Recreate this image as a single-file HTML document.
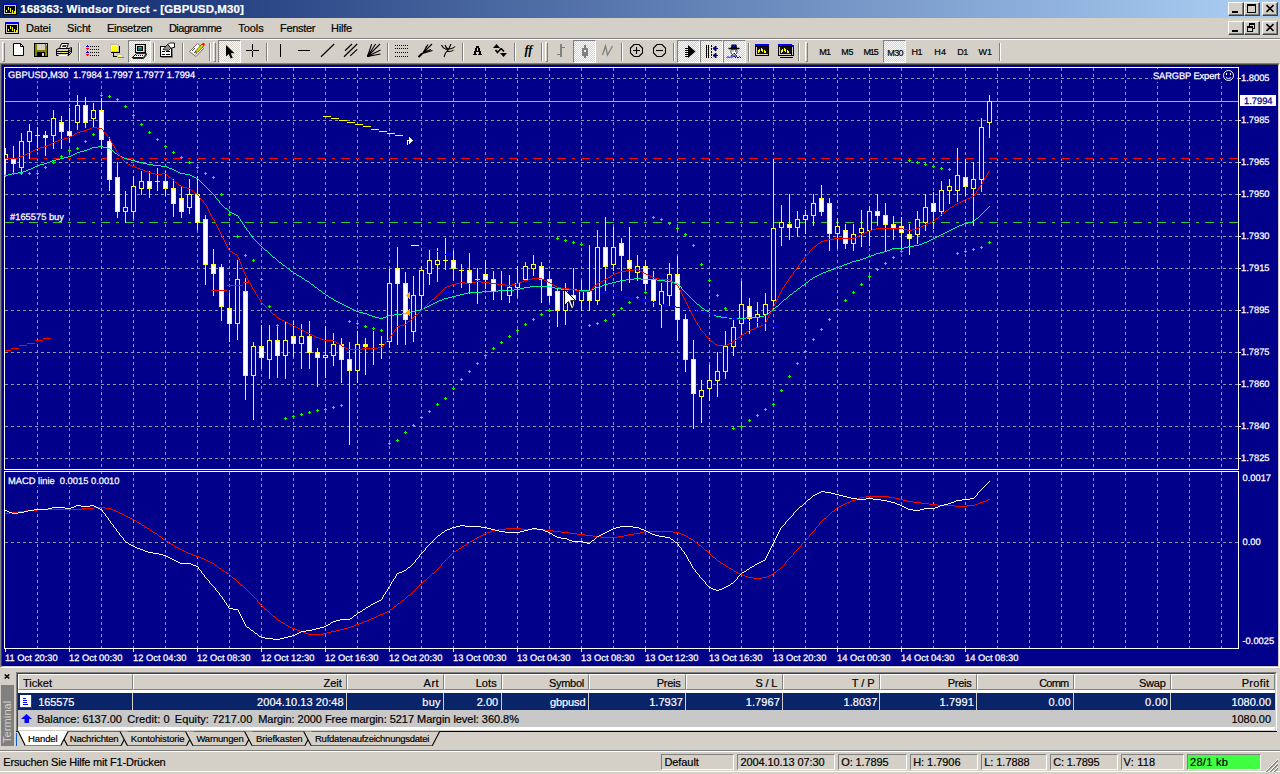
<!DOCTYPE html>
<html><head><meta charset="utf-8"><title>168363: Windsor Direct - [GBPUSD,M30]</title>
<style>

html,body{margin:0;padding:0}
body{width:1280px;height:774px;overflow:hidden;background:#d4d0c8;position:relative;font-family:"Liberation Sans",Arial,sans-serif;font-size:11px;color:#000}
.abs{position:absolute}
.tx{position:absolute;line-height:14px;white-space:pre;-webkit-text-stroke:0.2px currentColor}
#title{left:0;top:0;width:1280px;height:18px;background:linear-gradient(to right,#0a246a 0%,#a6caf0 96%,#a6caf0 100%)}
.wb{position:absolute;width:16px;height:14px;background:#d4d0c8;box-sizing:border-box;border:1px solid;border-color:#fff #404040 #404040 #fff;box-shadow:inset -1px -1px 0 #808080}
.wb svg{position:absolute;left:0;top:0}
.hl{position:absolute;height:1px;left:0;width:1280px}
.sep{position:absolute;top:43px;width:1px;height:18px;background:#808080;box-shadow:1px 0 0 #fff}
.grip{position:absolute;top:42px;width:3px;height:20px;box-sizing:border-box;border:1px solid;border-color:#fff #808080 #808080 #fff}
.btn{position:absolute;top:40px;width:23px;height:22px}
.btn.on{box-sizing:border-box;border:1px solid;border-color:#808080 #fff #fff #808080;background-color:#d4d0c8;background-image:linear-gradient(45deg,#fff 25%,transparent 25%,transparent 75%,#fff 75%),linear-gradient(45deg,#fff 25%,transparent 25%,transparent 75%,#fff 75%);background-size:2px 2px;background-position:0 0,1px 1px}
.btn svg{position:absolute;left:3px;top:2px}
.btn.on svg{left:3px;top:2px}
.hd{position:absolute;top:674px;height:16px;box-sizing:border-box;border:1px solid;border-color:#fff #808080 #808080 #fff;background:#d4d0c8}
.sp{position:absolute;top:754px;height:16px;box-sizing:border-box;border:1px solid;border-color:#808080 #fff #fff #808080}

</style></head><body>
<div id="title" class="abs"></div>
<svg class="abs" style="left:3px;top:3px" width="14" height="12" viewBox="0 0 14 12" shape-rendering="crispEdges"><rect x="0" y="0" width="14" height="12" fill="#000"/><rect x="0" y="0" width="14" height="2" fill="#0000ff"/><rect x="1" y="2" width="12" height="9" fill="#d4d0c8"/><rect x="2" y="3" width="10" height="7" fill="#000"/><path d="M3.500 7v2M5.500 4v3M7.500 5v4M9.500 7v3M11.500 8v2" stroke="#ffff00" stroke-width="1"/></svg>
<span id="t1" class="tx" style="left:20.30px;top:2.02px;font-size:11.5px;color:#fff;letter-spacing:0.107px;font-weight:bold;">168363: Windsor Direct - [GBPUSD,M30]</span>
<div class="wb" style="left:1228px;top:2px"><svg width="14" height="12" viewBox="0 0 14 12" shape-rendering="crispEdges"><rect x="3" y="8" width="6" height="2" fill="#000"/></svg></div><div class="wb" style="left:1244px;top:2px"><svg width="14" height="12" viewBox="0 0 14 12" shape-rendering="crispEdges"><path d="M2.500 1.500h8v8h-8z" fill="none" stroke="#000"/><rect x="2" y="1" width="9" height="2" fill="#000"/></svg></div><div class="wb" style="left:1262px;top:2px"><svg width="14" height="12" viewBox="0 0 14 12" shape-rendering="crispEdges"><path d="M3.500 2.200L10.500 8.800M10.500 2.200L3.500 8.800" stroke="#000" stroke-width="1.600" fill="none" shape-rendering="auto"/></svg></div>
<svg class="abs" style="left:5px;top:22px" width="14" height="12" viewBox="0 0 14 12" shape-rendering="crispEdges"><rect x="0" y="0" width="14" height="12" fill="#000"/><rect x="0" y="0" width="14" height="2" fill="#0000ff"/><rect x="1" y="2" width="12" height="9" fill="#d4d0c8"/><rect x="2" y="3" width="10" height="7" fill="#000"/><path d="M3.500 7v2M5.500 4v3M7.500 5v4M9.500 7v3M11.500 8v2" stroke="#ffff00" stroke-width="1"/></svg>
<span id="t2" class="tx" style="left:26.00px;top:21.19px;font-size:11px;color:#000;letter-spacing:-0.178px;">Datei</span>
<span id="t3" class="tx" style="left:67.00px;top:21.19px;font-size:11px;color:#000;letter-spacing:-0.134px;">Sicht</span>
<span id="t4" class="tx" style="left:107.00px;top:21.19px;font-size:11px;color:#000;letter-spacing:-0.324px;">Einsetzen</span>
<span id="t5" class="tx" style="left:168.90px;top:21.19px;font-size:11px;color:#000;letter-spacing:-0.473px;">Diagramme</span>
<span id="t6" class="tx" style="left:238.30px;top:21.19px;font-size:11px;color:#000;letter-spacing:-0.077px;">Tools</span>
<span id="t7" class="tx" style="left:280.10px;top:21.19px;font-size:11px;color:#000;letter-spacing:-0.314px;">Fenster</span>
<span id="t8" class="tx" style="left:331.10px;top:21.19px;font-size:11px;color:#000;letter-spacing:-0.263px;">Hilfe</span>
<div class="wb" style="left:1228px;top:21px"><svg width="14" height="12" viewBox="0 0 14 12" shape-rendering="crispEdges"><rect x="3" y="8" width="6" height="2" fill="#000"/></svg></div><div class="wb" style="left:1244px;top:21px"><svg width="14" height="12" viewBox="0 0 14 12" shape-rendering="crispEdges"><path d="M4.500 2.500h5v4h-5z" fill="none" stroke="#000"/><rect x="4" y="1" width="6" height="2" fill="#000"/><path d="M2.500 5.500h5v4h-5z" fill="#d4d0c8" stroke="#000"/><rect x="2" y="4" width="6" height="2" fill="#000"/></svg></div><div class="wb" style="left:1262px;top:21px"><svg width="14" height="12" viewBox="0 0 14 12" shape-rendering="crispEdges"><path d="M3.500 2.200L10.500 8.800M10.500 2.200L3.500 8.800" stroke="#000" stroke-width="1.600" fill="none" shape-rendering="auto"/></svg></div>
<div class="hl" style="top:38px;background:#808080"></div><div class="hl" style="top:39px;background:#fff"></div>
<div class="grip" style="left:2px"></div>
<svg class="abs" style="left:10px;top:42px" width="16" height="16" viewBox="0 0 16 16"><path d="M3.500 1.500H10.500L13.500 4.500V13.500H3.500Z" fill="#fff" stroke="#000"/><path d="M10.500 1.500V4.500H13.500" fill="none" stroke="#000"/></svg>
<svg class="abs" style="left:32px;top:42px" width="16" height="16" viewBox="0 0 16 16"><g shape-rendering="crispEdges"><rect x="2" y="1" width="14" height="14" fill="#000"/><rect x="3" y="2" width="12" height="12" fill="#808000"/><rect x="5" y="2" width="8" height="6" fill="#d4d0c8"/><rect x="5" y="10" width="8" height="4" fill="#000"/><rect x="10" y="11" width="2" height="3" fill="#d4d0c8"/><rect x="14" y="2" width="1" height="1" fill="#d4d0c8"/></g></svg>
<svg class="abs" style="left:56px;top:42px" width="16" height="16" viewBox="0 0 16 16"><path d="M3.500 6.500L5.500 1.500H12.500L10.500 6.500Z" fill="#fff" stroke="#000"/><path d="M6.500 3.500H10.500M6 4.500H10" stroke="#000" stroke-width=".8"/><path d="M0.500 7.500L3 6.500H13L15.500 5.500V10.500L12.500 13.500H0.500Z" fill="#d4d0c8" stroke="#000"/><path d="M0.500 9.500H12.500L15.500 7M0.500 11.500H12.500L15.500 8.500M12.500 7.500V13.500" stroke="#000" fill="none"/><rect x="6" y="10" width="4" height="1" fill="#ffff00"/><path d="M2.500 13.500H11.500" stroke="#fff"/></svg>
<div class="sep" style="left:78px"></div>
<svg class="abs" style="left:85px;top:42px" width="16" height="16" viewBox="0 0 16 16"><g shape-rendering="crispEdges"><path d="M5 4.500H14M5 7.500H14M5 10.500H14M5 13.500H14" stroke="#000" stroke-dasharray="1 1"/><path d="M2 3h1v1h1v1h-3v-1h1zM2 9h1v1h1v1h-3v-1h1z" fill="#0000ff"/><path d="M1 6h3v1h-1v1h-1v-1h-1zM1 12h3v1h-1v1h-1v-1h-1z" fill="#ff0000"/></g></svg>
<svg class="abs" style="left:108px;top:42px" width="16" height="16" viewBox="0 0 16 16"><g shape-rendering="crispEdges"><rect x="3" y="1" width="4" height="2" fill="#c0c0c0"/><rect x="2" y="2" width="9" height="8" fill="#c0c0c0"/><rect x="3" y="3" width="7" height="6" fill="#ffffa0"/><path d="M3 3.500H10M3 5.500H10M3 7.500H10" stroke="#ffff00" stroke-dasharray="1 1"/><path d="M4 4.500H10M4 6.500H10M4 8.500H10" stroke="#ffff00" stroke-dasharray="1 1"/><rect x="11" y="4" width="1" height="7" fill="#000"/><rect x="3" y="10" width="9" height="1" fill="#000"/><rect x="5" y="11" width="1" height="4" fill="#000"/><rect x="5" y="14" width="4" height="1" fill="#000"/><rect x="9" y="11" width="3" height="1" fill="#c0c0c0"/><rect x="9" y="12" width="6" height="3" fill="#c0c0c0"/><rect x="10" y="13" width="4" height="2" fill="#ffff60"/><rect x="10" y="15" width="6" height="1" fill="#808080"/></g></svg>
<div class="btn on" style="left:128px;width:23px;height:23px"></div>
<svg class="abs" style="left:131px;top:43px" width="16" height="16" viewBox="0 0 16 16"><g shape-rendering="crispEdges"><rect x="4" y="1" width="11" height="9" fill="#000"/><rect x="5" y="2" width="8" height="7" fill="#e8e6e0"/><rect x="13" y="2" width="1" height="7" fill="#808080"/><rect x="6" y="3" width="6" height="5" fill="#000"/><rect x="7" y="4" width="4" height="3" fill="#008080"/><rect x="8" y="4" width="2" height="1" fill="#00e0e0"/></g><path d="M5.500 10.700H15.300L12.300 14.600H1.300Z" fill="#fff" stroke="#000" stroke-width="1"/><path d="M4.500 12.600H12" stroke="#000" stroke-dasharray="1 1" shape-rendering="crispEdges"/><path d="M15.300 10.700V12L12.500 15.600H2" stroke="#000" fill="none" stroke-width=".9"/></svg>
<div class="sep" style="left:153px"></div>
<svg class="abs" style="left:159px;top:42px" width="16" height="16" viewBox="0 0 16 16"><g shape-rendering="crispEdges"><rect x="1" y="4" width="12" height="11" fill="#000"/><rect x="2" y="5" width="10" height="9" fill="#fff"/><rect x="13" y="5" width="1" height="11" fill="#808080"/><rect x="2" y="15" width="12" height="1" fill="#808080"/><path d="M3 9.500H6M3 12.500H6M7 9.500H11M7 12.500H11" stroke="#000"/></g><path d="M4 7.500L8.500 2.500L12 6L9.500 8.500Z" fill="#909090" stroke="#000" stroke-width=".8"/><path d="M9 2.500L10.500 1H15.500V5.500H13.500L12 6.500Z" fill="#fff" stroke="#000" stroke-width=".9"/></svg>
<div class="sep" style="left:182px"></div>
<svg class="abs" style="left:189px;top:42px" width="16" height="16" viewBox="0 0 16 16"><path d="M0.500 9.500L8.500 1.500L14.500 6.500L7 14.500Z" fill="#fff" stroke="#606060" stroke-width=".9"/><path d="M3 9L6 6M5 11L8 8M6.500 12.500L8 11" stroke="#404040" stroke-width="1"/><path d="M7 8.500L13 2L15 3.500L9 10L6.500 10.500Z" fill="#e0e000" stroke="#404000" stroke-width=".7"/><path d="M13.500 1.500L15.500 3" stroke="#ff0000" stroke-width="2"/></svg>
<div class="sep" style="left:209px"></div>
<div class="grip" style="left:213px"></div>
<div class="btn on" style="left:218px;width:23px;height:23px"></div>
<svg class="abs" style="left:221px;top:43px" width="16" height="16" viewBox="0 0 16 16"><path d="M5 2V13.500L7.700 11L9.700 15.500L11.700 14.700L9.700 10.300H13.500Z" fill="#000"/></svg>
<svg class="abs" style="left:244px;top:42px" width="16" height="16" viewBox="0 0 16 16"><path d="M8.500 2V15M2 8.500H15" stroke="#000" shape-rendering="crispEdges"/><rect x="8" y="8" width="1" height="1" fill="#d4d0c8" shape-rendering="crispEdges"/></svg>
<div class="sep" style="left:266px"></div>
<svg class="abs" style="left:272px;top:42px" width="16" height="16" viewBox="0 0 16 16"><path d="M8.500 2V15" stroke="#000" shape-rendering="crispEdges"/></svg>
<svg class="abs" style="left:296px;top:42px" width="16" height="16" viewBox="0 0 16 16"><path d="M2 8.500H14" stroke="#000" shape-rendering="crispEdges"/></svg>
<svg class="abs" style="left:320px;top:42px" width="16" height="16" viewBox="0 0 16 16"><path d="M1 14.800L14.200 2" stroke="#000" stroke-width="1.200"/></svg>
<svg class="abs" style="left:343px;top:42px" width="16" height="16" viewBox="0 0 16 16"><path d="M1 14.800L14.200 2M2 8.700L9 2M7.200 13.900L14.200 7.400" stroke="#000" stroke-width="1.200"/></svg>
<svg class="abs" style="left:366px;top:42px" width="16" height="16" viewBox="0 0 16 16"><path d="M1.500 14.500L5.700 2M1.500 14.500L9.600 2M1.500 14.500L14 2M1.500 14.500L14.500 8M1.500 14.500L14.500 12" stroke="#000" stroke-width="1.100"/><path d="M1 15V12.500L4 13.500L3.500 15Z" fill="#000"/></svg>
<div class="sep" style="left:387px"></div>
<svg class="abs" style="left:394px;top:42px" width="16" height="16" viewBox="0 0 16 16"><path d="M1 3.500H15M1 6.500H15M1 10.500H15M1 14.500H15" stroke="#000" stroke-dasharray="1 1" shape-rendering="crispEdges"/></svg>
<svg class="abs" style="left:418px;top:42px" width="16" height="16" viewBox="0 0 16 16"><path d="M1 14.800L14 2M4.500 11.500L10 2.500M4.500 11.500L14.500 8.500M6 10L8.500 4M6 10L13 7.500" stroke="#000" stroke-width="1.100" fill="none"/><path d="M0.500 15L4 11.500" stroke="#000" stroke-width="1.800"/></svg>
<svg class="abs" style="left:440px;top:42px" width="16" height="16" viewBox="0 0 16 16"><path d="M4 15L5.500 11L8.500 7.500L11 2M8.500 7.500C10.500 6.500 13 7 15 4.500M8.500 7.500C6.500 7.500 3 6.500 1.500 3M6.500 9.500C9 9.500 12 10 13.500 8M5 3C5.500 5 7 6.500 8.500 7.500" stroke="#000" stroke-width="1.100" fill="none"/></svg>
<div class="sep" style="left:462px"></div>
<svg class="abs" style="left:469px;top:42px" width="16" height="16" viewBox="0 0 16 16"><g shape-rendering="crispEdges" fill="#000"><rect x="7" y="4" width="3" height="2"/><rect x="6" y="6" width="2" height="3"/><rect x="9" y="6" width="2" height="3"/><rect x="6" y="9" width="5" height="1"/><rect x="5" y="9" width="2" height="3"/><rect x="10" y="9" width="2" height="3"/><rect x="4" y="12" width="4" height="1"/><rect x="9" y="12" width="4" height="1"/></g></svg>
<svg class="abs" style="left:492px;top:42px" width="16" height="16" viewBox="0 0 16 16"><path d="M1 6L4.500 2L8 6Z M8 11L11.500 15L15 11Z" fill="#000"/><path d="M3.500 8L5.500 10.500L9 6.500M9 6.500L12 9.500" stroke="#000" stroke-width="1.700" fill="none"/></svg>
<div class="sep" style="left:514px"></div>
<svg class="abs" style="left:520px;top:42px" width="16" height="16" viewBox="0 0 16 16"><text x="8.500" y="12" font-family="Liberation Serif,serif" font-style="italic" font-weight="bold" font-size="12.500" text-anchor="middle" fill="#000">ff</text></svg>
<div class="sep" style="left:541px"></div>
<div class="grip" style="left:545px"></div>
<svg class="abs" style="left:553px;top:42px" width="16" height="16" viewBox="0 0 16 16"><g shape-rendering="crispEdges" fill="#808080"><rect x="7" y="2" width="2" height="13"/><rect x="4" y="12" width="4" height="1"/><rect x="8" y="5" width="4" height="1"/></g></svg>
<div class="btn on" style="left:573px;width:23px;height:23px"></div>
<svg class="abs" style="left:577px;top:43px" width="16" height="16" viewBox="0 0 16 16"><g shape-rendering="crispEdges" fill="#808080"><rect x="7" y="2" width="2" height="13"/><rect x="5" y="5" width="6" height="8"/><rect x="7" y="7" width="2" height="2" fill="#eeece8"/></g></svg>
<svg class="abs" style="left:600px;top:42px" width="16" height="16" viewBox="0 0 16 16"><path d="M2.500 13L5.500 4L7.500 13L12.500 4" stroke="#808080" stroke-width="1.300" fill="none"/></svg>
<div class="sep" style="left:621px"></div>
<svg class="abs" style="left:628px;top:42px" width="16" height="16" viewBox="0 0 16 16"><path d="M6 2.500H11L14.500 6V11L11 14.500H6L2.500 11V6Z" fill="none" stroke="#000" stroke-width="1.100"/><path d="M5 8.500H12M8.500 5V12" stroke="#000" stroke-width="1.100"/></svg>
<svg class="abs" style="left:651px;top:42px" width="16" height="16" viewBox="0 0 16 16"><path d="M6 2.500H11L14.500 6V11L11 14.500H6L2.500 11V6Z" fill="none" stroke="#000" stroke-width="1.100"/><path d="M5 8.500H12" stroke="#000" stroke-width="1.100"/></svg>
<div class="sep" style="left:673px"></div>
<div class="btn on" style="left:677px;width:23px;height:23px"></div>
<svg class="abs" style="left:680px;top:43px" width="16" height="16" viewBox="0 0 16 16"><path d="M5 5.500H9M5 7.500H9M5 9.500H9M5 11.500H9M5 13.500H9" stroke="#000" shape-rendering="crispEdges"/><path d="M8 2L15.500 8.500L8 15Z" fill="#000"/></svg>
<div class="btn on" style="left:700px;width:23px;height:23px"></div>
<svg class="abs" style="left:703px;top:43px" width="16" height="16" viewBox="0 0 16 16"><g shape-rendering="crispEdges"><path d="M3.500 2V15M5.500 2V15" stroke="#000"/><path d="M8.500 2V15" stroke="#000" stroke-dasharray="2 1"/></g><path d="M15 5.500H11M10 5.500L13 3V8ZM15 12.500H11M10 12.500L13 10V15Z" stroke="#000080" fill="#000080" stroke-width="1"/></svg>
<div class="btn on" style="left:723px;width:23px;height:23px"></div>
<svg class="abs" style="left:726px;top:43px" width="16" height="16" viewBox="0 0 16 16"><path d="M5 5L5.500 1.500H10.500L11 5Z" fill="#000"/><rect x="7" y="2" width="2" height="2" fill="#0000ff"/><path d="M2.500 5.500H13.500" stroke="#000" stroke-width="1.500"/><path d="M5 6.500V10L7 12H9L11 10V6.500Z" fill="#fff" stroke="#000" stroke-width=".7"/><path d="M6.500 8H7.500M9 8H10M7.500 10.500H9" stroke="#000" stroke-width=".9"/><path d="M9 7L11 10" stroke="#808080"/><path d="M0.500 15L2 13.500L3.500 15L5 13.500L6.500 15M9 15L10.500 13.500L12 15L13.500 13.500L15 15" stroke="#0000a0" fill="none" stroke-width="1"/><path d="M5 12.500L8 13.500L11 12.500" stroke="#0000a0" fill="none"/></svg>
<div class="sep" style="left:748px"></div>
<svg class="abs" style="left:754px;top:42px" width="16" height="16" viewBox="0 0 16 16"><g shape-rendering="crispEdges"><rect x="1" y="2" width="14" height="12" fill="#000"/><rect x="1" y="2" width="14" height="2" fill="#0000ff"/><rect x="2" y="5" width="12" height="8" fill="#d4d0c8"/><rect x="3" y="5" width="11" height="7" fill="#101010"/><path d="M4.500 8V11M5.500 7V10M7.500 6V9M8.500 7V10M10.500 8V11M11.500 9V11" stroke="#ffff00"/></g></svg>
<svg class="abs" style="left:778px;top:42px" width="16" height="16" viewBox="0 0 16 16"><g shape-rendering="crispEdges"><rect x="4" y="3" width="12" height="11" fill="#000"/><rect x="5" y="4" width="10" height="9" fill="#d4d0c8"/><rect x="12" y="3" width="4" height="2" fill="#0000ff"/><rect x="2" y="15" width="13" height="1" fill="#000"/><rect x="0" y="2" width="14" height="12" fill="#000"/><rect x="0" y="2" width="14" height="2" fill="#0000ff"/><rect x="1" y="5" width="12" height="8" fill="#d4d0c8"/><rect x="2" y="5" width="11" height="7" fill="#101010"/><path d="M3.500 8V11M4.500 7V10M6.500 6V9M7.500 7V10M9.500 8V11M10.500 9V11" stroke="#ffff00"/></g></svg>
<div class="sep" style="left:798px"></div>
<div class="grip" style="left:805px"></div>
<div class="btn on" style="left:883px;width:23px;height:23px"></div>
<span id="t9" class="tx" style="left:819.20px;top:44.88px;font-size:9px;color:#000;letter-spacing:-0.608px;">M1</span>
<span id="t10" class="tx" style="left:841.20px;top:44.88px;font-size:9px;color:#000;letter-spacing:-0.108px;">M5</span>
<span id="t11" class="tx" style="left:863.40px;top:44.88px;font-size:9px;color:#000;letter-spacing:-1.072px;">M15</span>
<span id="t12" class="tx" style="left:887.30px;top:45.88px;font-size:9px;color:#000;letter-spacing:-0.605px;">M30</span>
<span id="t13" class="tx" style="left:911.40px;top:44.88px;font-size:9px;color:#000;letter-spacing:-0.358px;">H1</span>
<span id="t14" class="tx" style="left:934.20px;top:44.88px;font-size:9px;color:#000;letter-spacing:0.192px;">H4</span>
<span id="t15" class="tx" style="left:957.20px;top:44.88px;font-size:9px;color:#000;letter-spacing:-0.358px;">D1</span>
<span id="t16" class="tx" style="left:978.50px;top:44.88px;font-size:9px;color:#000;letter-spacing:0.050px;">W1</span>
<div class="sep" style="left:999px"></div>
<div class="abs" style="left:0;top:63px;width:1280px;height:605px;box-sizing:border-box;border:1px solid;border-color:#808080 #fff #fff #808080"></div>
<div class="abs" style="left:1px;top:64px;width:1278px;height:603px;box-sizing:border-box;border:1px solid;border-color:#404040 #d4d0c8 #d4d0c8 #404040"></div>
<svg id="chart" width="1280" height="774" viewBox="0 0 1280 774" style="position:absolute;left:0;top:0" shape-rendering="crispEdges">
<rect x="2" y="65" width="1276" height="601" fill="#00008b"/>
<g fill="#fff">
<rect x="4" y="67" width="1235" height="1"/>
<rect x="4" y="67" width="1" height="582"/>
<rect x="1238" y="67" width="1" height="582"/>
<rect x="4" y="469" width="1235" height="1"/>
<rect x="4" y="471" width="1235" height="1"/>
<rect x="4" y="648" width="1235" height="1"/>
</g>
<rect x="4" y="470" width="1" height="1" fill="#00008b"/><rect x="1238" y="470" width="1" height="1" fill="#00008b"/>
<g stroke="#8e9ba7" stroke-width="1" stroke-dasharray="3 3" fill="none">
<path d="M37.5 68V469"/>
<path d="M37.5 472V648"/>
<path d="M69.5 68V469"/>
<path d="M69.5 472V648"/>
<path d="M101.5 68V469"/>
<path d="M101.5 472V648"/>
<path d="M133.5 68V469"/>
<path d="M133.5 472V648"/>
<path d="M165.5 68V469"/>
<path d="M165.5 472V648"/>
<path d="M197.5 68V469"/>
<path d="M197.5 472V648"/>
<path d="M229.5 68V469"/>
<path d="M229.5 472V648"/>
<path d="M261.5 68V469"/>
<path d="M261.5 472V648"/>
<path d="M293.5 68V469"/>
<path d="M293.5 472V648"/>
<path d="M325.5 68V469"/>
<path d="M325.5 472V648"/>
<path d="M357.5 68V469"/>
<path d="M357.5 472V648"/>
<path d="M389.5 68V469"/>
<path d="M389.5 472V648"/>
<path d="M421.5 68V469"/>
<path d="M421.5 472V648"/>
<path d="M453.5 68V469"/>
<path d="M453.5 472V648"/>
<path d="M485.5 68V469"/>
<path d="M485.5 472V648"/>
<path d="M517.5 68V469"/>
<path d="M517.5 472V648"/>
<path d="M549.5 68V469"/>
<path d="M549.5 472V648"/>
<path d="M581.5 68V469"/>
<path d="M581.5 472V648"/>
<path d="M613.5 68V469"/>
<path d="M613.5 472V648"/>
<path d="M645.5 68V469"/>
<path d="M645.5 472V648"/>
<path d="M677.5 68V469"/>
<path d="M677.5 472V648"/>
<path d="M709.5 68V469"/>
<path d="M709.5 472V648"/>
<path d="M741.5 68V469"/>
<path d="M741.5 472V648"/>
<path d="M773.5 68V469"/>
<path d="M773.5 472V648"/>
<path d="M805.5 68V469"/>
<path d="M805.5 472V648"/>
<path d="M837.5 68V469"/>
<path d="M837.5 472V648"/>
<path d="M869.5 68V469"/>
<path d="M869.5 472V648"/>
<path d="M901.5 68V469"/>
<path d="M901.5 472V648"/>
<path d="M933.5 68V469"/>
<path d="M933.5 472V648"/>
<path d="M965.5 68V469"/>
<path d="M965.5 472V648"/>
<path d="M997.5 68V469"/>
<path d="M997.5 472V648"/>
<path d="M1029.5 68V469"/>
<path d="M1029.5 472V648"/>
<path d="M1061.5 68V469"/>
<path d="M1061.5 472V648"/>
<path d="M1093.5 68V469"/>
<path d="M1093.5 472V648"/>
<path d="M1125.5 68V469"/>
<path d="M1125.5 472V648"/>
<path d="M1157.5 68V469"/>
<path d="M1157.5 472V648"/>
<path d="M1189.5 68V469"/>
<path d="M1189.5 472V648"/>
<path d="M1221.5 68V469"/>
<path d="M1221.5 472V648"/>
<path d="M5 78.5H1238"/>
<path d="M5 120.5H1238"/>
<path d="M5 162.5H1238"/>
<path d="M5 194.5H1238"/>
<path d="M5 236.5H1238"/>
<path d="M5 268.5H1238"/>
<path d="M5 310.5H1238"/>
<path d="M5 352.5H1238"/>
<path d="M5 384.5H1238"/>
<path d="M5 426.5H1238"/>
<path d="M5 458.5H1238"/>
<path d="M5 542.5H1238"/>
</g>
<rect x="5" y="101" width="1233" height="1" fill="#a8b0b8"/>
<g fill="#fff">
<rect x="1239" y="78" width="2" height="1"/>
<rect x="1239" y="120" width="2" height="1"/>
<rect x="1239" y="162" width="2" height="1"/>
<rect x="1239" y="194" width="2" height="1"/>
<rect x="1239" y="236" width="2" height="1"/>
<rect x="1239" y="268" width="2" height="1"/>
<rect x="1239" y="310" width="2" height="1"/>
<rect x="1239" y="352" width="2" height="1"/>
<rect x="1239" y="384" width="2" height="1"/>
<rect x="1239" y="426" width="2" height="1"/>
<rect x="1239" y="458" width="2" height="1"/>
<rect x="5" y="649" width="1" height="3"/>
<rect x="69" y="649" width="1" height="3"/>
<rect x="133" y="649" width="1" height="3"/>
<rect x="197" y="649" width="1" height="3"/>
<rect x="261" y="649" width="1" height="3"/>
<rect x="325" y="649" width="1" height="3"/>
<rect x="389" y="649" width="1" height="3"/>
<rect x="453" y="649" width="1" height="3"/>
<rect x="517" y="649" width="1" height="3"/>
<rect x="581" y="649" width="1" height="3"/>
<rect x="645" y="649" width="1" height="3"/>
<rect x="709" y="649" width="1" height="3"/>
<rect x="773" y="649" width="1" height="3"/>
<rect x="837" y="649" width="1" height="3"/>
<rect x="901" y="649" width="1" height="3"/>
<rect x="965" y="649" width="1" height="3"/>
</g>
<path d="M29 158.5H1238" stroke="#ff0000" stroke-width="1" stroke-dasharray="9 6 3 6" fill="none"/>
<path d="M5 222.5H1238" stroke="#32cd32" stroke-width="1" stroke-dasharray="9 6 3 6" fill="none"/>
<g fill="#ffff00">
<rect x="5" y="148" width="1" height="28"/>
<rect x="5" y="154" width="3" height="6"/>
<rect x="13" y="146" width="1" height="28"/>
<rect x="11" y="159" width="5" height="5"/>
<rect x="21" y="133" width="1" height="41"/>
<rect x="19" y="141" width="5" height="27"/>
<rect x="29" y="124" width="1" height="35"/>
<rect x="27" y="131" width="5" height="11"/>
<rect x="37" y="127" width="1" height="24"/>
<rect x="35" y="135" width="5" height="1"/>
<rect x="45" y="131" width="1" height="25"/>
<rect x="43" y="135" width="5" height="3"/>
<rect x="53" y="110" width="1" height="39"/>
<rect x="51" y="118" width="5" height="18"/>
<rect x="61" y="116" width="1" height="33"/>
<rect x="59" y="122" width="5" height="10"/>
<rect x="69" y="108" width="1" height="35"/>
<rect x="67" y="131" width="5" height="5"/>
<rect x="77" y="95" width="1" height="35"/>
<rect x="75" y="105" width="5" height="18"/>
<rect x="85" y="97" width="1" height="31"/>
<rect x="83" y="105" width="5" height="18"/>
<rect x="93" y="103" width="1" height="24"/>
<rect x="91" y="110" width="5" height="9"/>
<rect x="101" y="98" width="1" height="51"/>
<rect x="99" y="110" width="5" height="30"/>
<rect x="109" y="137" width="1" height="54"/>
<rect x="107" y="141" width="5" height="39"/>
<rect x="117" y="162" width="1" height="56"/>
<rect x="115" y="177" width="5" height="35"/>
<rect x="125" y="191" width="1" height="32"/>
<rect x="123" y="207" width="5" height="5"/>
<rect x="133" y="176" width="1" height="43"/>
<rect x="131" y="186" width="5" height="26"/>
<rect x="141" y="171" width="1" height="24"/>
<rect x="139" y="181" width="5" height="8"/>
<rect x="149" y="171" width="1" height="27"/>
<rect x="147" y="181" width="5" height="8"/>
<rect x="157" y="168" width="1" height="23"/>
<rect x="155" y="181" width="5" height="1"/>
<rect x="165" y="171" width="1" height="25"/>
<rect x="163" y="181" width="5" height="8"/>
<rect x="173" y="179" width="1" height="38"/>
<rect x="171" y="188" width="5" height="16"/>
<rect x="181" y="186" width="1" height="32"/>
<rect x="179" y="198" width="5" height="14"/>
<rect x="189" y="179" width="1" height="35"/>
<rect x="187" y="194" width="5" height="14"/>
<rect x="197" y="176" width="1" height="54"/>
<rect x="195" y="194" width="5" height="29"/>
<rect x="205" y="215" width="1" height="70"/>
<rect x="203" y="219" width="5" height="46"/>
<rect x="213" y="249" width="1" height="47"/>
<rect x="211" y="264" width="5" height="10"/>
<rect x="221" y="264" width="1" height="57"/>
<rect x="219" y="267" width="5" height="40"/>
<rect x="229" y="293" width="1" height="49"/>
<rect x="227" y="308" width="5" height="16"/>
<rect x="237" y="260" width="1" height="80"/>
<rect x="235" y="279" width="5" height="45"/>
<rect x="245" y="278" width="1" height="122"/>
<rect x="243" y="291" width="5" height="85"/>
<rect x="253" y="342" width="1" height="78"/>
<rect x="251" y="346" width="5" height="30"/>
<rect x="261" y="325" width="1" height="44"/>
<rect x="259" y="346" width="5" height="12"/>
<rect x="269" y="325" width="1" height="54"/>
<rect x="267" y="340" width="5" height="20"/>
<rect x="277" y="324" width="1" height="54"/>
<rect x="275" y="340" width="5" height="16"/>
<rect x="285" y="322" width="1" height="57"/>
<rect x="283" y="340" width="5" height="16"/>
<rect x="293" y="321" width="1" height="36"/>
<rect x="291" y="336" width="5" height="8"/>
<rect x="301" y="324" width="1" height="45"/>
<rect x="299" y="336" width="5" height="8"/>
<rect x="309" y="321" width="1" height="48"/>
<rect x="307" y="336" width="5" height="17"/>
<rect x="317" y="348" width="1" height="39"/>
<rect x="315" y="352" width="5" height="6"/>
<rect x="325" y="326" width="1" height="52"/>
<rect x="323" y="355" width="5" height="3"/>
<rect x="333" y="333" width="1" height="33"/>
<rect x="331" y="344" width="5" height="12"/>
<rect x="341" y="338" width="1" height="45"/>
<rect x="339" y="344" width="5" height="16"/>
<rect x="349" y="342" width="1" height="103"/>
<rect x="347" y="359" width="5" height="12"/>
<rect x="357" y="331" width="1" height="52"/>
<rect x="355" y="344" width="5" height="27"/>
<rect x="365" y="338" width="1" height="37"/>
<rect x="363" y="344" width="5" height="3"/>
<rect x="373" y="331" width="1" height="34"/>
<rect x="381" y="336" width="1" height="23"/>
<rect x="379" y="344" width="5" height="1"/>
<rect x="389" y="269" width="1" height="79"/>
<rect x="387" y="283" width="5" height="59"/>
<rect x="397" y="247" width="1" height="98"/>
<rect x="395" y="268" width="5" height="16"/>
<rect x="405" y="272" width="1" height="73"/>
<rect x="403" y="283" width="5" height="37"/>
<rect x="413" y="276" width="1" height="66"/>
<rect x="411" y="295" width="5" height="37"/>
<rect x="421" y="266" width="1" height="43"/>
<rect x="419" y="270" width="5" height="26"/>
<rect x="429" y="250" width="1" height="35"/>
<rect x="427" y="260" width="5" height="14"/>
<rect x="437" y="248" width="1" height="34"/>
<rect x="435" y="260" width="5" height="5"/>
<rect x="445" y="238" width="1" height="32"/>
<rect x="443" y="260" width="5" height="1"/>
<rect x="453" y="251" width="1" height="30"/>
<rect x="451" y="260" width="5" height="9"/>
<rect x="461" y="264" width="1" height="24"/>
<rect x="459" y="270" width="5" height="1"/>
<rect x="469" y="253" width="1" height="41"/>
<rect x="467" y="270" width="5" height="14"/>
<rect x="477" y="268" width="1" height="36"/>
<rect x="475" y="279" width="5" height="1"/>
<rect x="485" y="260" width="1" height="29"/>
<rect x="483" y="274" width="5" height="6"/>
<rect x="493" y="271" width="1" height="29"/>
<rect x="491" y="279" width="5" height="13"/>
<rect x="501" y="271" width="1" height="29"/>
<rect x="509" y="275" width="1" height="28"/>
<rect x="507" y="287" width="5" height="9"/>
<rect x="517" y="266" width="1" height="32"/>
<rect x="515" y="283" width="5" height="5"/>
<rect x="525" y="262" width="1" height="19"/>
<rect x="523" y="266" width="5" height="14"/>
<rect x="533" y="255" width="1" height="21"/>
<rect x="531" y="264" width="5" height="5"/>
<rect x="541" y="262" width="1" height="41"/>
<rect x="539" y="266" width="5" height="14"/>
<rect x="549" y="271" width="1" height="32"/>
<rect x="547" y="279" width="5" height="17"/>
<rect x="557" y="287" width="1" height="40"/>
<rect x="555" y="291" width="5" height="20"/>
<rect x="565" y="283" width="1" height="42"/>
<rect x="563" y="291" width="5" height="20"/>
<rect x="573" y="268" width="1" height="39"/>
<rect x="571" y="295" width="5" height="6"/>
<rect x="581" y="280" width="1" height="31"/>
<rect x="579" y="291" width="5" height="10"/>
<rect x="589" y="245" width="1" height="66"/>
<rect x="587" y="291" width="5" height="10"/>
<rect x="597" y="230" width="1" height="75"/>
<rect x="595" y="247" width="5" height="54"/>
<rect x="605" y="217" width="1" height="74"/>
<rect x="603" y="247" width="5" height="20"/>
<rect x="613" y="227" width="1" height="44"/>
<rect x="611" y="247" width="5" height="18"/>
<rect x="621" y="238" width="1" height="53"/>
<rect x="619" y="243" width="5" height="13"/>
<rect x="629" y="227" width="1" height="56"/>
<rect x="627" y="260" width="5" height="9"/>
<rect x="637" y="255" width="1" height="26"/>
<rect x="635" y="266" width="5" height="7"/>
<rect x="645" y="260" width="1" height="30"/>
<rect x="643" y="266" width="5" height="18"/>
<rect x="653" y="271" width="1" height="36"/>
<rect x="651" y="279" width="5" height="22"/>
<rect x="661" y="283" width="1" height="45"/>
<rect x="659" y="291" width="5" height="14"/>
<rect x="669" y="263" width="1" height="43"/>
<rect x="667" y="274" width="5" height="22"/>
<rect x="677" y="256" width="1" height="85"/>
<rect x="675" y="274" width="5" height="46"/>
<rect x="685" y="314" width="1" height="58"/>
<rect x="683" y="319" width="5" height="41"/>
<rect x="693" y="340" width="1" height="89"/>
<rect x="691" y="359" width="5" height="35"/>
<rect x="701" y="380" width="1" height="43"/>
<rect x="699" y="390" width="5" height="7"/>
<rect x="709" y="365" width="1" height="36"/>
<rect x="707" y="380" width="5" height="9"/>
<rect x="717" y="352" width="1" height="45"/>
<rect x="715" y="371" width="5" height="10"/>
<rect x="725" y="331" width="1" height="48"/>
<rect x="723" y="346" width="5" height="26"/>
<rect x="733" y="320" width="1" height="36"/>
<rect x="731" y="327" width="5" height="20"/>
<rect x="741" y="281" width="1" height="54"/>
<rect x="739" y="304" width="5" height="20"/>
<rect x="749" y="298" width="1" height="36"/>
<rect x="747" y="306" width="5" height="13"/>
<rect x="757" y="302" width="1" height="25"/>
<rect x="755" y="314" width="5" height="4"/>
<rect x="765" y="293" width="1" height="38"/>
<rect x="763" y="304" width="5" height="11"/>
<rect x="773" y="159" width="1" height="150"/>
<rect x="771" y="228" width="5" height="73"/>
<rect x="781" y="205" width="1" height="41"/>
<rect x="779" y="222" width="5" height="6"/>
<rect x="789" y="194" width="1" height="46"/>
<rect x="787" y="224" width="5" height="4"/>
<rect x="797" y="211" width="1" height="26"/>
<rect x="795" y="219" width="5" height="9"/>
<rect x="805" y="210" width="1" height="24"/>
<rect x="803" y="215" width="5" height="5"/>
<rect x="813" y="194" width="1" height="32"/>
<rect x="811" y="203" width="5" height="13"/>
<rect x="821" y="185" width="1" height="31"/>
<rect x="819" y="198" width="5" height="14"/>
<rect x="829" y="198" width="1" height="53"/>
<rect x="827" y="203" width="5" height="31"/>
<rect x="837" y="218" width="1" height="31"/>
<rect x="835" y="226" width="5" height="8"/>
<rect x="845" y="224" width="1" height="25"/>
<rect x="843" y="230" width="5" height="14"/>
<rect x="853" y="224" width="1" height="27"/>
<rect x="851" y="234" width="5" height="10"/>
<rect x="861" y="210" width="1" height="37"/>
<rect x="859" y="228" width="5" height="5"/>
<rect x="869" y="206" width="1" height="40"/>
<rect x="867" y="211" width="5" height="20"/>
<rect x="877" y="194" width="1" height="32"/>
<rect x="875" y="211" width="5" height="5"/>
<rect x="885" y="203" width="1" height="48"/>
<rect x="883" y="215" width="5" height="10"/>
<rect x="893" y="216" width="1" height="24"/>
<rect x="891" y="224" width="5" height="5"/>
<rect x="901" y="217" width="1" height="33"/>
<rect x="899" y="226" width="5" height="7"/>
<rect x="909" y="224" width="1" height="31"/>
<rect x="907" y="234" width="5" height="5"/>
<rect x="917" y="211" width="1" height="33"/>
<rect x="915" y="219" width="5" height="16"/>
<rect x="925" y="194" width="1" height="37"/>
<rect x="923" y="207" width="5" height="16"/>
<rect x="933" y="192" width="1" height="37"/>
<rect x="931" y="203" width="5" height="9"/>
<rect x="941" y="181" width="1" height="35"/>
<rect x="939" y="190" width="5" height="22"/>
<rect x="949" y="179" width="1" height="25"/>
<rect x="947" y="186" width="5" height="5"/>
<rect x="957" y="148" width="1" height="54"/>
<rect x="955" y="175" width="5" height="16"/>
<rect x="965" y="159" width="1" height="37"/>
<rect x="963" y="177" width="5" height="10"/>
<rect x="973" y="162" width="1" height="64"/>
<rect x="971" y="179" width="5" height="10"/>
<rect x="981" y="118" width="1" height="74"/>
<rect x="979" y="127" width="5" height="53"/>
<rect x="989" y="95" width="1" height="43"/>
<rect x="987" y="101" width="5" height="22"/>
</g>
<rect x="5" y="155" width="2" height="4" fill="#00008b"/>
<rect x="12" y="160" width="3" height="3" fill="#fff"/>
<rect x="20" y="142" width="3" height="25" fill="#00008b"/>
<rect x="28" y="132" width="3" height="9" fill="#00008b"/>
<rect x="44" y="136" width="3" height="1" fill="#fff"/>
<rect x="52" y="119" width="3" height="16" fill="#00008b"/>
<rect x="60" y="123" width="3" height="8" fill="#fff"/>
<rect x="68" y="132" width="3" height="3" fill="#fff"/>
<rect x="76" y="106" width="3" height="16" fill="#00008b"/>
<rect x="84" y="106" width="3" height="16" fill="#fff"/>
<rect x="92" y="111" width="3" height="7" fill="#00008b"/>
<rect x="100" y="111" width="3" height="28" fill="#fff"/>
<rect x="108" y="142" width="3" height="37" fill="#fff"/>
<rect x="116" y="178" width="3" height="33" fill="#fff"/>
<rect x="124" y="208" width="3" height="3" fill="#00008b"/>
<rect x="132" y="187" width="3" height="24" fill="#00008b"/>
<rect x="140" y="182" width="3" height="6" fill="#00008b"/>
<rect x="148" y="182" width="3" height="6" fill="#fff"/>
<rect x="164" y="182" width="3" height="6" fill="#fff"/>
<rect x="172" y="189" width="3" height="14" fill="#fff"/>
<rect x="180" y="199" width="3" height="12" fill="#fff"/>
<rect x="188" y="195" width="3" height="12" fill="#00008b"/>
<rect x="196" y="195" width="3" height="27" fill="#fff"/>
<rect x="204" y="220" width="3" height="44" fill="#fff"/>
<rect x="212" y="265" width="3" height="8" fill="#fff"/>
<rect x="220" y="268" width="3" height="38" fill="#fff"/>
<rect x="228" y="309" width="3" height="14" fill="#fff"/>
<rect x="236" y="280" width="3" height="43" fill="#00008b"/>
<rect x="244" y="292" width="3" height="83" fill="#fff"/>
<rect x="252" y="347" width="3" height="28" fill="#00008b"/>
<rect x="260" y="347" width="3" height="10" fill="#fff"/>
<rect x="268" y="341" width="3" height="18" fill="#00008b"/>
<rect x="276" y="341" width="3" height="14" fill="#fff"/>
<rect x="284" y="341" width="3" height="14" fill="#00008b"/>
<rect x="292" y="337" width="3" height="6" fill="#fff"/>
<rect x="300" y="337" width="3" height="6" fill="#00008b"/>
<rect x="308" y="337" width="3" height="15" fill="#fff"/>
<rect x="316" y="353" width="3" height="4" fill="#fff"/>
<rect x="324" y="356" width="3" height="1" fill="#00008b"/>
<rect x="332" y="345" width="3" height="10" fill="#00008b"/>
<rect x="340" y="345" width="3" height="14" fill="#fff"/>
<rect x="348" y="360" width="3" height="10" fill="#fff"/>
<rect x="356" y="345" width="3" height="25" fill="#00008b"/>
<rect x="364" y="345" width="3" height="1" fill="#fff"/>
<rect x="388" y="284" width="3" height="57" fill="#00008b"/>
<rect x="396" y="269" width="3" height="14" fill="#fff"/>
<rect x="404" y="284" width="3" height="35" fill="#fff"/>
<rect x="412" y="296" width="3" height="35" fill="#00008b"/>
<rect x="420" y="271" width="3" height="24" fill="#00008b"/>
<rect x="428" y="261" width="3" height="12" fill="#00008b"/>
<rect x="436" y="261" width="3" height="3" fill="#00008b"/>
<rect x="452" y="261" width="3" height="7" fill="#fff"/>
<rect x="468" y="271" width="3" height="12" fill="#fff"/>
<rect x="484" y="275" width="3" height="4" fill="#fff"/>
<rect x="492" y="280" width="3" height="11" fill="#fff"/>
<rect x="508" y="288" width="3" height="7" fill="#00008b"/>
<rect x="516" y="284" width="3" height="3" fill="#00008b"/>
<rect x="524" y="267" width="3" height="12" fill="#00008b"/>
<rect x="532" y="265" width="3" height="3" fill="#00008b"/>
<rect x="540" y="267" width="3" height="12" fill="#fff"/>
<rect x="548" y="280" width="3" height="15" fill="#fff"/>
<rect x="556" y="292" width="3" height="18" fill="#fff"/>
<rect x="564" y="292" width="3" height="18" fill="#00008b"/>
<rect x="572" y="296" width="3" height="4" fill="#fff"/>
<rect x="580" y="292" width="3" height="8" fill="#00008b"/>
<rect x="588" y="292" width="3" height="8" fill="#fff"/>
<rect x="596" y="248" width="3" height="52" fill="#00008b"/>
<rect x="604" y="248" width="3" height="18" fill="#fff"/>
<rect x="612" y="248" width="3" height="16" fill="#00008b"/>
<rect x="620" y="244" width="3" height="11" fill="#fff"/>
<rect x="628" y="261" width="3" height="7" fill="#fff"/>
<rect x="636" y="267" width="3" height="5" fill="#00008b"/>
<rect x="644" y="267" width="3" height="16" fill="#fff"/>
<rect x="652" y="280" width="3" height="20" fill="#fff"/>
<rect x="660" y="292" width="3" height="12" fill="#00008b"/>
<rect x="668" y="275" width="3" height="20" fill="#00008b"/>
<rect x="676" y="275" width="3" height="44" fill="#fff"/>
<rect x="684" y="320" width="3" height="39" fill="#fff"/>
<rect x="692" y="360" width="3" height="33" fill="#fff"/>
<rect x="700" y="391" width="3" height="5" fill="#00008b"/>
<rect x="708" y="381" width="3" height="7" fill="#00008b"/>
<rect x="716" y="372" width="3" height="8" fill="#00008b"/>
<rect x="724" y="347" width="3" height="24" fill="#00008b"/>
<rect x="732" y="328" width="3" height="18" fill="#00008b"/>
<rect x="740" y="305" width="3" height="18" fill="#00008b"/>
<rect x="748" y="307" width="3" height="11" fill="#fff"/>
<rect x="756" y="315" width="3" height="2" fill="#00008b"/>
<rect x="764" y="305" width="3" height="9" fill="#00008b"/>
<rect x="772" y="229" width="3" height="71" fill="#00008b"/>
<rect x="780" y="223" width="3" height="4" fill="#00008b"/>
<rect x="788" y="225" width="3" height="2" fill="#fff"/>
<rect x="796" y="220" width="3" height="7" fill="#00008b"/>
<rect x="804" y="216" width="3" height="3" fill="#00008b"/>
<rect x="812" y="204" width="3" height="11" fill="#00008b"/>
<rect x="820" y="199" width="3" height="12" fill="#fff"/>
<rect x="828" y="204" width="3" height="29" fill="#fff"/>
<rect x="836" y="227" width="3" height="6" fill="#00008b"/>
<rect x="844" y="231" width="3" height="12" fill="#fff"/>
<rect x="852" y="235" width="3" height="8" fill="#00008b"/>
<rect x="860" y="229" width="3" height="3" fill="#00008b"/>
<rect x="868" y="212" width="3" height="18" fill="#00008b"/>
<rect x="876" y="212" width="3" height="3" fill="#fff"/>
<rect x="884" y="216" width="3" height="8" fill="#fff"/>
<rect x="892" y="225" width="3" height="3" fill="#fff"/>
<rect x="900" y="227" width="3" height="5" fill="#fff"/>
<rect x="908" y="235" width="3" height="3" fill="#fff"/>
<rect x="916" y="220" width="3" height="14" fill="#00008b"/>
<rect x="924" y="208" width="3" height="14" fill="#00008b"/>
<rect x="932" y="204" width="3" height="7" fill="#fff"/>
<rect x="940" y="191" width="3" height="20" fill="#00008b"/>
<rect x="948" y="187" width="3" height="3" fill="#00008b"/>
<rect x="956" y="176" width="3" height="14" fill="#00008b"/>
<rect x="964" y="178" width="3" height="8" fill="#fff"/>
<rect x="972" y="180" width="3" height="8" fill="#00008b"/>
<rect x="980" y="128" width="3" height="51" fill="#00008b"/>
<rect x="988" y="102" width="3" height="20" fill="#00008b"/>
<g stroke="#0000ff" stroke-width="1" fill="none">
<path d="M419 247.5H427M427 249.5H435M435 251.5H443M443 254.5H451M443 292.5H451"/>
</g>
<g fill="#00ff00">
<rect x="4" y="175" width="3" height="1"/><rect x="5" y="174" width="1" height="3"/>
<rect x="12" y="173" width="3" height="1"/><rect x="13" y="172" width="1" height="3"/>
<rect x="20" y="173" width="3" height="1"/><rect x="21" y="172" width="1" height="3"/>
<rect x="28" y="173" width="3" height="1"/><rect x="29" y="172" width="1" height="3"/>
<rect x="36" y="173" width="3" height="1"/><rect x="37" y="172" width="1" height="3"/>
<rect x="44" y="167" width="3" height="1"/><rect x="45" y="166" width="1" height="3"/>
<rect x="52" y="162" width="3" height="1"/><rect x="53" y="161" width="1" height="3"/>
<rect x="60" y="156" width="3" height="1"/><rect x="61" y="155" width="1" height="3"/>
<rect x="68" y="150" width="3" height="1"/><rect x="69" y="149" width="1" height="3"/>
<rect x="76" y="148" width="3" height="1"/><rect x="77" y="147" width="1" height="3"/>
<rect x="84" y="141" width="3" height="1"/><rect x="85" y="140" width="1" height="3"/>
<rect x="92" y="134" width="3" height="1"/><rect x="93" y="133" width="1" height="3"/>
<rect x="100" y="95" width="3" height="1"/><rect x="101" y="94" width="1" height="3"/>
<rect x="108" y="96" width="3" height="1"/><rect x="109" y="95" width="1" height="3"/>
<rect x="116" y="99" width="3" height="1"/><rect x="117" y="98" width="1" height="3"/>
<rect x="124" y="106" width="3" height="1"/><rect x="125" y="105" width="1" height="3"/>
<rect x="132" y="115" width="3" height="1"/><rect x="133" y="114" width="1" height="3"/>
<rect x="140" y="124" width="3" height="1"/><rect x="141" y="123" width="1" height="3"/>
<rect x="148" y="132" width="3" height="1"/><rect x="149" y="131" width="1" height="3"/>
<rect x="156" y="139" width="3" height="1"/><rect x="157" y="138" width="1" height="3"/>
<rect x="164" y="146" width="3" height="1"/><rect x="165" y="145" width="1" height="3"/>
<rect x="172" y="152" width="3" height="1"/><rect x="173" y="151" width="1" height="3"/>
<rect x="180" y="157" width="3" height="1"/><rect x="181" y="156" width="1" height="3"/>
<rect x="188" y="162" width="3" height="1"/><rect x="189" y="161" width="1" height="3"/>
<rect x="196" y="167" width="3" height="1"/><rect x="197" y="166" width="1" height="3"/>
<rect x="204" y="173" width="3" height="1"/><rect x="205" y="172" width="1" height="3"/>
<rect x="212" y="177" width="3" height="1"/><rect x="213" y="176" width="1" height="3"/>
<rect x="220" y="194" width="3" height="1"/><rect x="221" y="193" width="1" height="3"/>
<rect x="228" y="214" width="3" height="1"/><rect x="229" y="213" width="1" height="3"/>
<rect x="236" y="236" width="3" height="1"/><rect x="237" y="235" width="1" height="3"/>
<rect x="244" y="255" width="3" height="1"/><rect x="245" y="254" width="1" height="3"/>
<rect x="252" y="260" width="3" height="1"/><rect x="253" y="259" width="1" height="3"/>
<rect x="260" y="279" width="3" height="1"/><rect x="261" y="278" width="1" height="3"/>
<rect x="268" y="306" width="3" height="1"/><rect x="269" y="305" width="1" height="3"/>
<rect x="276" y="325" width="3" height="1"/><rect x="277" y="324" width="1" height="3"/>
<rect x="284" y="418" width="3" height="1"/><rect x="285" y="417" width="1" height="3"/>
<rect x="292" y="416" width="3" height="1"/><rect x="293" y="415" width="1" height="3"/>
<rect x="300" y="414" width="3" height="1"/><rect x="301" y="413" width="1" height="3"/>
<rect x="308" y="412" width="3" height="1"/><rect x="309" y="411" width="1" height="3"/>
<rect x="316" y="410" width="3" height="1"/><rect x="317" y="409" width="1" height="3"/>
<rect x="324" y="409" width="3" height="1"/><rect x="325" y="408" width="1" height="3"/>
<rect x="332" y="407" width="3" height="1"/><rect x="333" y="406" width="1" height="3"/>
<rect x="340" y="405" width="3" height="1"/><rect x="341" y="404" width="1" height="3"/>
<rect x="348" y="321" width="3" height="1"/><rect x="349" y="320" width="1" height="3"/>
<rect x="356" y="323" width="3" height="1"/><rect x="357" y="322" width="1" height="3"/>
<rect x="364" y="326" width="3" height="1"/><rect x="365" y="325" width="1" height="3"/>
<rect x="372" y="328" width="3" height="1"/><rect x="373" y="327" width="1" height="3"/>
<rect x="380" y="330" width="3" height="1"/><rect x="381" y="329" width="1" height="3"/>
<rect x="388" y="443" width="3" height="1"/><rect x="389" y="442" width="1" height="3"/>
<rect x="396" y="440" width="3" height="1"/><rect x="397" y="439" width="1" height="3"/>
<rect x="404" y="432" width="3" height="1"/><rect x="405" y="431" width="1" height="3"/>
<rect x="412" y="425" width="3" height="1"/><rect x="413" y="424" width="1" height="3"/>
<rect x="420" y="417" width="3" height="1"/><rect x="421" y="416" width="1" height="3"/>
<rect x="428" y="411" width="3" height="1"/><rect x="429" y="410" width="1" height="3"/>
<rect x="436" y="404" width="3" height="1"/><rect x="437" y="403" width="1" height="3"/>
<rect x="444" y="398" width="3" height="1"/><rect x="445" y="397" width="1" height="3"/>
<rect x="452" y="388" width="3" height="1"/><rect x="453" y="387" width="1" height="3"/>
<rect x="460" y="379" width="3" height="1"/><rect x="461" y="378" width="1" height="3"/>
<rect x="468" y="371" width="3" height="1"/><rect x="469" y="370" width="1" height="3"/>
<rect x="476" y="363" width="3" height="1"/><rect x="477" y="362" width="1" height="3"/>
<rect x="484" y="355" width="3" height="1"/><rect x="485" y="354" width="1" height="3"/>
<rect x="492" y="348" width="3" height="1"/><rect x="493" y="347" width="1" height="3"/>
<rect x="500" y="342" width="3" height="1"/><rect x="501" y="341" width="1" height="3"/>
<rect x="508" y="336" width="3" height="1"/><rect x="509" y="335" width="1" height="3"/>
<rect x="516" y="330" width="3" height="1"/><rect x="517" y="329" width="1" height="3"/>
<rect x="524" y="324" width="3" height="1"/><rect x="525" y="323" width="1" height="3"/>
<rect x="532" y="319" width="3" height="1"/><rect x="533" y="318" width="1" height="3"/>
<rect x="540" y="314" width="3" height="1"/><rect x="541" y="313" width="1" height="3"/>
<rect x="548" y="310" width="3" height="1"/><rect x="549" y="309" width="1" height="3"/>
<rect x="556" y="238" width="3" height="1"/><rect x="557" y="237" width="1" height="3"/>
<rect x="564" y="240" width="3" height="1"/><rect x="565" y="239" width="1" height="3"/>
<rect x="572" y="242" width="3" height="1"/><rect x="573" y="241" width="1" height="3"/>
<rect x="580" y="244" width="3" height="1"/><rect x="581" y="243" width="1" height="3"/>
<rect x="588" y="325" width="3" height="1"/><rect x="589" y="324" width="1" height="3"/>
<rect x="596" y="323" width="3" height="1"/><rect x="597" y="322" width="1" height="3"/>
<rect x="604" y="320" width="3" height="1"/><rect x="605" y="319" width="1" height="3"/>
<rect x="612" y="314" width="3" height="1"/><rect x="613" y="313" width="1" height="3"/>
<rect x="620" y="308" width="3" height="1"/><rect x="621" y="307" width="1" height="3"/>
<rect x="628" y="302" width="3" height="1"/><rect x="629" y="301" width="1" height="3"/>
<rect x="636" y="297" width="3" height="1"/><rect x="637" y="296" width="1" height="3"/>
<rect x="644" y="292" width="3" height="1"/><rect x="645" y="291" width="1" height="3"/>
<rect x="652" y="217" width="3" height="1"/><rect x="653" y="216" width="1" height="3"/>
<rect x="660" y="219" width="3" height="1"/><rect x="661" y="218" width="1" height="3"/>
<rect x="668" y="223" width="3" height="1"/><rect x="669" y="222" width="1" height="3"/>
<rect x="676" y="228" width="3" height="1"/><rect x="677" y="227" width="1" height="3"/>
<rect x="684" y="234" width="3" height="1"/><rect x="685" y="233" width="1" height="3"/>
<rect x="692" y="245" width="3" height="1"/><rect x="693" y="244" width="1" height="3"/>
<rect x="700" y="264" width="3" height="1"/><rect x="701" y="263" width="1" height="3"/>
<rect x="708" y="280" width="3" height="1"/><rect x="709" y="279" width="1" height="3"/>
<rect x="716" y="295" width="3" height="1"/><rect x="717" y="294" width="1" height="3"/>
<rect x="724" y="308" width="3" height="1"/><rect x="725" y="307" width="1" height="3"/>
<rect x="732" y="428" width="3" height="1"/><rect x="733" y="427" width="1" height="3"/>
<rect x="740" y="426" width="3" height="1"/><rect x="741" y="425" width="1" height="3"/>
<rect x="748" y="420" width="3" height="1"/><rect x="749" y="419" width="1" height="3"/>
<rect x="756" y="415" width="3" height="1"/><rect x="757" y="414" width="1" height="3"/>
<rect x="764" y="409" width="3" height="1"/><rect x="765" y="408" width="1" height="3"/>
<rect x="772" y="404" width="3" height="1"/><rect x="773" y="403" width="1" height="3"/>
<rect x="780" y="390" width="3" height="1"/><rect x="781" y="389" width="1" height="3"/>
<rect x="788" y="376" width="3" height="1"/><rect x="789" y="375" width="1" height="3"/>
<rect x="796" y="363" width="3" height="1"/><rect x="797" y="362" width="1" height="3"/>
<rect x="804" y="351" width="3" height="1"/><rect x="805" y="350" width="1" height="3"/>
<rect x="812" y="339" width="3" height="1"/><rect x="813" y="338" width="1" height="3"/>
<rect x="820" y="329" width="3" height="1"/><rect x="821" y="328" width="1" height="3"/>
<rect x="828" y="319" width="3" height="1"/><rect x="829" y="318" width="1" height="3"/>
<rect x="836" y="309" width="3" height="1"/><rect x="837" y="308" width="1" height="3"/>
<rect x="844" y="300" width="3" height="1"/><rect x="845" y="299" width="1" height="3"/>
<rect x="852" y="292" width="3" height="1"/><rect x="853" y="291" width="1" height="3"/>
<rect x="860" y="284" width="3" height="1"/><rect x="861" y="283" width="1" height="3"/>
<rect x="868" y="276" width="3" height="1"/><rect x="869" y="275" width="1" height="3"/>
<rect x="876" y="269" width="3" height="1"/><rect x="877" y="268" width="1" height="3"/>
<rect x="884" y="263" width="3" height="1"/><rect x="885" y="262" width="1" height="3"/>
<rect x="892" y="257" width="3" height="1"/><rect x="893" y="256" width="1" height="3"/>
<rect x="900" y="251" width="3" height="1"/><rect x="901" y="250" width="1" height="3"/>
<rect x="908" y="160" width="3" height="1"/><rect x="909" y="159" width="1" height="3"/>
<rect x="916" y="162" width="3" height="1"/><rect x="917" y="161" width="1" height="3"/>
<rect x="924" y="164" width="3" height="1"/><rect x="925" y="163" width="1" height="3"/>
<rect x="932" y="166" width="3" height="1"/><rect x="933" y="165" width="1" height="3"/>
<rect x="940" y="168" width="3" height="1"/><rect x="941" y="167" width="1" height="3"/>
<rect x="948" y="169" width="3" height="1"/><rect x="949" y="168" width="1" height="3"/>
<rect x="956" y="253" width="3" height="1"/><rect x="957" y="252" width="1" height="3"/>
<rect x="964" y="251" width="3" height="1"/><rect x="965" y="250" width="1" height="3"/>
<rect x="972" y="249" width="3" height="1"/><rect x="973" y="248" width="1" height="3"/>
<rect x="980" y="247" width="3" height="1"/><rect x="981" y="246" width="1" height="3"/>
<rect x="988" y="242" width="3" height="1"/><rect x="989" y="241" width="1" height="3"/>
</g>
<path d="M98 146.5h5M92 147.5h6M103 147.5h4M90 148.5h2M107 148.5h3M87 149.5h3M110 149.5h1M84 150.5h3M111 150.5h2M80 151.5h4M113 151.5h1M77 152.5h3M114 152.5h1M75 153.5h2M115 153.5h2M73 154.5h2M117 154.5h1M71 155.5h2M118 155.5h2M68 156.5h3M120 156.5h2M64 157.5h4M122 157.5h2M60 158.5h4M124 158.5h3M56 159.5h4M127 159.5h4M52 160.5h4M131 160.5h4M50 161.5h2M135 161.5h4M47 162.5h3M139 162.5h4M44 163.5h3M143 163.5h4M40 164.5h4M147 164.5h6M37 165.5h3M153 165.5h8M35 166.5h2M161 166.5h6M33 167.5h2M167 167.5h2M31 168.5h2M169 168.5h3M28 169.5h3M172 169.5h2M26 170.5h2M174 170.5h2M23 171.5h3M176 171.5h2M18 172.5h5M178 172.5h2M12 173.5h6M180 173.5h5M8 174.5h4M185 174.5h5M5 175.5h3M190 175.5h2M192 176.5h2M194 177.5h2M196 178.5h2M198 179.5h1M199 180.5h1M200 181.5h1M201 182.5h1M202 183.5h1M203 184.5h1M204 185.5h1M205 186.5h1M206 187.5h1M207 188.5h1M208 189.5h1M209 190.5h1M210 191.5h1M211 192.5h1M212 193.5h1M213 194.5h1M214 195.5h1M215 196.5h1M215 197.5h1M216 198.5h1M217 199.5h1M218 200.5h1M219 201.5h1M219 202.5h1M220 203.5h1M221 204.5h1M222 205.5h1M223 206.5h1M989 206.5h1M224 207.5h1M988 207.5h1M225 208.5h2M987 208.5h1M227 209.5h1M986 209.5h1M228 210.5h1M985 210.5h1M229 211.5h1M984 211.5h1M230 212.5h2M983 212.5h1M232 213.5h2M982 213.5h1M234 214.5h2M981 214.5h1M236 215.5h2M980 215.5h1M238 216.5h1M979 216.5h1M238 217.5h1M978 217.5h1M239 218.5h1M976 218.5h2M240 219.5h1M975 219.5h1M240 220.5h1M974 220.5h1M241 221.5h1M972 221.5h2M242 222.5h1M968 222.5h4M242 223.5h1M964 223.5h4M243 224.5h1M962 224.5h2M244 225.5h1M959 225.5h3M244 226.5h1M957 226.5h2M245 227.5h1M955 227.5h2M246 228.5h1M953 228.5h2M246 229.5h1M951 229.5h2M247 230.5h1M949 230.5h2M248 231.5h1M947 231.5h2M249 232.5h1M945 232.5h2M249 233.5h1M943 233.5h2M250 234.5h1M941 234.5h2M251 235.5h1M939 235.5h2M252 236.5h1M937 236.5h2M252 237.5h1M935 237.5h2M253 238.5h1M933 238.5h2M254 239.5h1M931 239.5h2M255 240.5h1M929 240.5h2M256 241.5h1M927 241.5h2M257 242.5h1M924 242.5h3M258 243.5h1M922 243.5h2M259 244.5h1M919 244.5h3M260 245.5h1M914 245.5h5M261 246.5h1M908 246.5h6M262 247.5h1M904 247.5h4M263 248.5h1M892 248.5h12M264 249.5h1M890 249.5h2M265 250.5h2M887 250.5h3M267 251.5h1M884 251.5h3M268 252.5h1M880 252.5h4M269 253.5h1M876 253.5h4M270 254.5h1M874 254.5h2M271 255.5h1M871 255.5h3M272 256.5h1M868 256.5h3M273 257.5h2M866 257.5h2M275 258.5h1M863 258.5h3M276 259.5h1M860 259.5h3M277 260.5h1M856 260.5h4M278 261.5h1M852 261.5h4M279 262.5h2M850 262.5h2M281 263.5h1M847 263.5h3M282 264.5h1M844 264.5h3M283 265.5h2M842 265.5h2M285 266.5h1M839 266.5h3M286 267.5h1M836 267.5h3M287 268.5h2M834 268.5h2M289 269.5h1M831 269.5h3M290 270.5h1M828 270.5h3M291 271.5h2M826 271.5h2M293 272.5h1M823 272.5h3M294 273.5h2M821 273.5h2M296 274.5h1M819 274.5h2M297 275.5h2M817 275.5h2M299 276.5h2M815 276.5h2M301 277.5h1M813 277.5h2M302 278.5h2M634 278.5h7M812 278.5h1M304 279.5h1M626 279.5h8M641 279.5h16M810 279.5h2M305 280.5h2M620 280.5h6M657 280.5h8M809 280.5h1M307 281.5h2M616 281.5h4M665 281.5h6M808 281.5h1M309 282.5h1M612 282.5h4M671 282.5h4M806 282.5h2M310 283.5h1M608 283.5h4M675 283.5h3M805 283.5h1M311 284.5h2M604 284.5h4M678 284.5h1M804 284.5h1M313 285.5h1M602 285.5h2M679 285.5h1M802 285.5h2M314 286.5h1M530 286.5h21M599 286.5h3M680 286.5h1M801 286.5h1M315 287.5h2M524 287.5h6M551 287.5h4M596 287.5h3M681 287.5h1M800 287.5h1M317 288.5h1M520 288.5h4M555 288.5h6M594 288.5h2M681 288.5h1M798 288.5h2M318 289.5h1M514 289.5h6M561 289.5h16M591 289.5h3M682 289.5h1M797 289.5h1M319 290.5h2M498 290.5h16M577 290.5h14M683 290.5h1M796 290.5h1M321 291.5h1M482 291.5h16M684 291.5h1M794 291.5h2M322 292.5h1M468 292.5h14M685 292.5h1M793 292.5h1M323 293.5h2M464 293.5h4M686 293.5h1M792 293.5h1M325 294.5h1M460 294.5h4M687 294.5h1M790 294.5h2M326 295.5h2M456 295.5h4M688 295.5h1M789 295.5h1M328 296.5h1M452 296.5h4M689 296.5h1M788 296.5h1M329 297.5h2M448 297.5h4M690 297.5h1M787 297.5h1M331 298.5h2M444 298.5h4M691 298.5h1M786 298.5h1M333 299.5h1M442 299.5h2M692 299.5h1M784 299.5h2M334 300.5h2M439 300.5h3M693 300.5h1M783 300.5h1M336 301.5h2M437 301.5h2M694 301.5h1M782 301.5h1M338 302.5h2M435 302.5h2M695 302.5h1M781 302.5h1M340 303.5h2M433 303.5h2M696 303.5h1M780 303.5h1M342 304.5h2M431 304.5h2M697 304.5h2M779 304.5h1M344 305.5h2M429 305.5h2M699 305.5h1M778 305.5h1M346 306.5h2M427 306.5h2M700 306.5h1M776 306.5h2M348 307.5h2M425 307.5h2M701 307.5h1M775 307.5h1M350 308.5h2M423 308.5h2M702 308.5h2M774 308.5h1M352 309.5h2M420 309.5h3M704 309.5h1M773 309.5h1M354 310.5h2M416 310.5h4M705 310.5h2M772 310.5h1M356 311.5h3M412 311.5h4M707 311.5h2M770 311.5h2M359 312.5h4M408 312.5h4M709 312.5h1M769 312.5h1M363 313.5h4M402 313.5h6M710 313.5h2M768 313.5h1M367 314.5h2M394 314.5h8M712 314.5h2M766 314.5h2M369 315.5h3M388 315.5h6M714 315.5h2M764 315.5h2M372 316.5h3M386 316.5h2M716 316.5h5M760 316.5h4M375 317.5h4M383 317.5h3M721 317.5h8M746 317.5h14M379 318.5h4M729 318.5h17" stroke="#00fa9a" stroke-width="1" fill="none"/>
<path d="M92 127.5h5M90 128.5h2M97 128.5h5M87 129.5h3M102 129.5h1M84 130.5h3M103 130.5h1M80 131.5h4M103 131.5h1M77 132.5h3M104 132.5h1M75 133.5h2M105 133.5h1M74 134.5h1M106 134.5h1M72 135.5h2M107 135.5h1M70 136.5h2M107 136.5h1M68 137.5h2M108 137.5h1M64 138.5h4M109 138.5h1M60 139.5h4M110 139.5h1M58 140.5h2M110 140.5h1M55 141.5h3M111 141.5h1M53 142.5h2M111 142.5h1M51 143.5h2M112 143.5h1M49 144.5h2M112 144.5h1M47 145.5h2M113 145.5h1M44 146.5h3M114 146.5h1M40 147.5h4M114 147.5h1M37 148.5h3M115 148.5h1M35 149.5h2M115 149.5h1M33 150.5h2M116 150.5h1M31 151.5h2M116 151.5h1M29 152.5h2M117 152.5h1M27 153.5h2M118 153.5h1M25 154.5h2M119 154.5h1M23 155.5h2M119 155.5h1M20 156.5h3M120 156.5h1M18 157.5h2M121 157.5h1M5 158.5h13M122 158.5h1M123 159.5h1M123 160.5h1M124 161.5h1M125 162.5h1M126 163.5h2M128 164.5h2M130 165.5h2M132 166.5h3M135 167.5h2M137 168.5h3M140 169.5h3M143 170.5h2M989 170.5h1M145 171.5h3M988 171.5h1M148 172.5h3M988 172.5h1M151 173.5h4M162 173.5h4M987 173.5h1M155 174.5h7M166 174.5h1M987 174.5h1M167 175.5h1M986 175.5h1M168 176.5h1M986 176.5h1M169 177.5h2M985 177.5h1M171 178.5h1M984 178.5h1M172 179.5h1M984 179.5h1M173 180.5h1M983 180.5h1M174 181.5h1M983 181.5h1M175 182.5h2M982 182.5h1M177 183.5h1M982 183.5h1M178 184.5h1M981 184.5h1M179 185.5h2M980 185.5h1M181 186.5h2M980 186.5h1M183 187.5h4M979 187.5h1M187 188.5h3M978 188.5h1M190 189.5h1M978 189.5h1M191 190.5h2M977 190.5h1M193 191.5h1M976 191.5h1M194 192.5h1M976 192.5h1M195 193.5h2M975 193.5h1M197 194.5h1M974 194.5h1M198 195.5h1M974 195.5h1M199 196.5h1M972 196.5h2M199 197.5h1M970 197.5h2M200 198.5h1M967 198.5h3M201 199.5h1M965 199.5h2M202 200.5h1M963 200.5h2M203 201.5h1M961 201.5h2M203 202.5h1M959 202.5h2M204 203.5h1M957 203.5h2M205 204.5h1M955 204.5h2M206 205.5h1M954 205.5h1M206 206.5h1M952 206.5h2M207 207.5h1M950 207.5h2M207 208.5h1M949 208.5h1M208 209.5h1M948 209.5h1M208 210.5h1M946 210.5h2M209 211.5h1M945 211.5h1M209 212.5h1M944 212.5h1M210 213.5h1M942 213.5h2M210 214.5h1M941 214.5h1M211 215.5h1M940 215.5h1M211 216.5h1M939 216.5h1M212 217.5h1M938 217.5h1M212 218.5h1M936 218.5h2M213 219.5h1M935 219.5h1M214 220.5h1M934 220.5h1M214 221.5h1M932 221.5h2M215 222.5h1M930 222.5h2M215 223.5h1M927 223.5h3M216 224.5h1M925 224.5h2M216 225.5h1M923 225.5h2M217 226.5h1M921 226.5h2M217 227.5h1M919 227.5h2M218 228.5h1M876 228.5h27M916 228.5h3M218 229.5h1M872 229.5h4M903 229.5h4M912 229.5h4M219 230.5h1M869 230.5h3M907 230.5h5M219 231.5h1M867 231.5h2M220 232.5h1M865 232.5h2M220 233.5h1M863 233.5h2M221 234.5h1M861 234.5h2M221 235.5h1M859 235.5h2M222 236.5h1M857 236.5h2M222 237.5h1M855 237.5h2M223 238.5h1M834 238.5h21M223 239.5h1M828 239.5h6M224 240.5h1M824 240.5h4M224 241.5h1M821 241.5h3M225 242.5h1M820 242.5h1M225 243.5h1M818 243.5h2M226 244.5h1M817 244.5h1M226 245.5h1M816 245.5h1M227 246.5h1M814 246.5h2M227 247.5h1M813 247.5h1M228 248.5h1M812 248.5h1M228 249.5h1M811 249.5h1M229 250.5h1M810 250.5h1M230 251.5h2M809 251.5h1M232 252.5h1M809 252.5h1M233 253.5h2M808 253.5h1M235 254.5h2M807 254.5h1M237 255.5h1M806 255.5h1M237 256.5h1M805 256.5h1M238 257.5h1M804 257.5h1M238 258.5h1M804 258.5h1M239 259.5h1M803 259.5h1M239 260.5h1M802 260.5h1M239 261.5h1M801 261.5h1M240 262.5h1M801 262.5h1M240 263.5h1M800 263.5h1M241 264.5h1M799 264.5h1M241 265.5h1M798 265.5h1M241 266.5h1M798 266.5h1M242 267.5h1M797 267.5h1M242 268.5h1M796 268.5h1M243 269.5h1M634 269.5h4M796 269.5h1M243 270.5h1M626 270.5h8M638 270.5h2M795 270.5h1M243 271.5h1M620 271.5h6M640 271.5h2M794 271.5h1M244 272.5h1M618 272.5h2M642 272.5h2M793 272.5h1M244 273.5h1M615 273.5h3M644 273.5h2M793 273.5h1M245 274.5h1M613 274.5h2M646 274.5h2M792 274.5h1M245 275.5h1M611 275.5h2M648 275.5h2M791 275.5h1M246 276.5h1M610 276.5h1M650 276.5h2M790 276.5h1M246 277.5h1M608 277.5h2M652 277.5h3M790 277.5h1M247 278.5h1M532 278.5h10M606 278.5h2M655 278.5h4M789 278.5h1M247 279.5h1M528 279.5h4M542 279.5h2M605 279.5h1M659 279.5h11M788 279.5h1M248 280.5h1M524 280.5h4M544 280.5h2M603 280.5h2M670 280.5h1M788 280.5h1M248 281.5h1M476 281.5h5M522 281.5h2M546 281.5h2M601 281.5h2M671 281.5h2M787 281.5h1M249 282.5h1M460 282.5h5M472 282.5h4M481 282.5h8M519 282.5h3M548 282.5h2M599 282.5h2M673 282.5h1M786 282.5h1M250 283.5h1M456 283.5h4M465 283.5h7M489 283.5h8M516 283.5h3M550 283.5h2M597 283.5h2M674 283.5h1M786 283.5h1M250 284.5h1M452 284.5h4M497 284.5h8M512 284.5h4M552 284.5h1M596 284.5h1M675 284.5h2M785 284.5h1M251 285.5h1M450 285.5h2M505 285.5h7M553 285.5h2M595 285.5h1M677 285.5h1M784 285.5h1M251 286.5h1M447 286.5h3M555 286.5h2M594 286.5h1M678 286.5h1M784 286.5h1M252 287.5h1M445 287.5h2M557 287.5h4M593 287.5h1M678 287.5h1M783 287.5h1M252 288.5h1M444 288.5h1M561 288.5h8M592 288.5h1M679 288.5h1M782 288.5h1M253 289.5h1M443 289.5h1M569 289.5h6M591 289.5h1M679 289.5h1M782 289.5h1M254 290.5h1M442 290.5h1M575 290.5h4M590 290.5h1M680 290.5h1M781 290.5h1M254 291.5h1M441 291.5h1M579 291.5h11M680 291.5h1M781 291.5h1M255 292.5h1M440 292.5h1M681 292.5h1M780 292.5h1M255 293.5h1M439 293.5h1M681 293.5h1M780 293.5h1M256 294.5h1M438 294.5h1M682 294.5h1M779 294.5h1M257 295.5h1M437 295.5h1M682 295.5h1M779 295.5h1M257 296.5h1M436 296.5h1M683 296.5h1M778 296.5h1M258 297.5h1M435 297.5h1M683 297.5h1M778 297.5h1M259 298.5h1M434 298.5h1M684 298.5h1M777 298.5h1M259 299.5h1M432 299.5h2M684 299.5h1M777 299.5h1M260 300.5h1M431 300.5h1M685 300.5h1M776 300.5h1M260 301.5h1M430 301.5h1M685 301.5h1M776 301.5h1M261 302.5h1M429 302.5h1M686 302.5h1M775 302.5h1M262 303.5h1M428 303.5h1M686 303.5h1M775 303.5h1M263 304.5h1M427 304.5h1M687 304.5h1M774 304.5h1M264 305.5h1M426 305.5h1M687 305.5h1M774 305.5h1M265 306.5h1M425 306.5h1M688 306.5h1M773 306.5h1M266 307.5h1M424 307.5h1M688 307.5h1M773 307.5h1M267 308.5h1M423 308.5h1M689 308.5h1M772 308.5h1M268 309.5h1M422 309.5h1M689 309.5h1M772 309.5h1M269 310.5h1M421 310.5h1M690 310.5h1M771 310.5h1M270 311.5h1M420 311.5h1M690 311.5h1M771 311.5h1M271 312.5h1M419 312.5h1M691 312.5h1M770 312.5h1M272 313.5h1M418 313.5h1M691 313.5h1M770 313.5h1M273 314.5h2M416 314.5h2M692 314.5h1M769 314.5h1M275 315.5h1M415 315.5h1M692 315.5h1M769 315.5h1M276 316.5h1M414 316.5h1M693 316.5h1M768 316.5h1M277 317.5h1M413 317.5h1M693 317.5h1M768 317.5h1M278 318.5h2M412 318.5h1M694 318.5h1M767 318.5h1M280 319.5h2M411 319.5h1M694 319.5h1M767 319.5h1M282 320.5h2M410 320.5h1M695 320.5h1M766 320.5h1M284 321.5h2M408 321.5h2M695 321.5h1M766 321.5h1M286 322.5h2M407 322.5h1M696 322.5h1M765 322.5h1M288 323.5h2M406 323.5h1M697 323.5h1M765 323.5h1M290 324.5h2M404 324.5h2M697 324.5h1M763 324.5h2M292 325.5h2M400 325.5h4M698 325.5h1M761 325.5h2M294 326.5h2M397 326.5h3M699 326.5h1M759 326.5h2M296 327.5h2M396 327.5h1M699 327.5h1M756 327.5h3M298 328.5h2M396 328.5h1M700 328.5h1M754 328.5h2M300 329.5h2M395 329.5h1M700 329.5h1M751 329.5h3M302 330.5h2M394 330.5h1M701 330.5h1M749 330.5h2M304 331.5h2M394 331.5h1M702 331.5h1M747 331.5h2M306 332.5h2M393 332.5h1M703 332.5h1M746 332.5h1M308 333.5h2M392 333.5h1M704 333.5h1M744 333.5h2M310 334.5h2M392 334.5h1M705 334.5h1M742 334.5h2M312 335.5h2M391 335.5h1M705 335.5h1M741 335.5h1M314 336.5h2M390 336.5h1M706 336.5h1M740 336.5h1M316 337.5h3M390 337.5h1M707 337.5h1M738 337.5h2M319 338.5h2M389 338.5h1M708 338.5h1M737 338.5h1M321 339.5h3M388 339.5h1M709 339.5h1M736 339.5h1M324 340.5h10M387 340.5h1M710 340.5h1M734 340.5h2M334 341.5h2M386 341.5h1M711 341.5h2M733 341.5h1M336 342.5h1M385 342.5h1M713 342.5h1M731 342.5h2M337 343.5h2M385 343.5h1M714 343.5h1M729 343.5h2M339 344.5h2M384 344.5h1M715 344.5h2M727 344.5h2M341 345.5h1M383 345.5h1M717 345.5h10M342 346.5h2M382 346.5h1M344 347.5h2M378 347.5h4M346 348.5h2M362 348.5h16M348 349.5h14" stroke="#ff0000" stroke-width="1" fill="none"/>
<path d="M211 290.5H227M227 285.5H243M243 282.5H250" stroke="#ff0000" stroke-width="1" fill="none"/>
<path d="M5 350.5H11M11 348.5H19M19 345.5H27M27 343.5H35M35 340.5H43M43 338.5H51" stroke="#ff0000" stroke-width="1" fill="none"/>
<rect x="411" y="245" width="8" height="1" fill="#fff"/>
<path d="M323 116.5h8M331 118.5h8M339 120.5h8M347 122.5h8M355 124.5h8M363 126.5h8M371 129.5h8M379 131.5h8M387 133.5h8M395 135.5h8" stroke="#ffff00" stroke-width="1" fill="none"/>
<path d="M407 145V140H409V137L413 141L409 144V141H408V145Z" fill="#fff"/>
<path d="M406 295.5L410 292V299ZM406 312.5L410 309V316Z" fill="#ffa500"/>
<path d="M602 292.5h3M605 293.5h4M612 294.5h3M615 295.5h5M620 296.5h1M624 296.5h1M625 297.5h5M630 298.5h3M636 299.5h5M641 300.5h4M648 301.5h3M651 302.5h5M656 303.5h1M660 303.5h1M661 304.5h5M666 305.5h3M672 306.5h4M676 307.5h5M684 308.5h2M686 309.5h5M691 310.5h2M696 310.5h1M697 311.5h5M702 312.5h3M708 313.5h4M712 314.5h5M720 315.5h2M722 316.5h5M727 317.5h2M732 318.5h5M737 319.5h4M744 320.5h3M747 321.5h6M756 322.5h2M758 323.5h5M763 324.5h2M768 325.5h5M773 326.5h4M780 327.5h1" stroke="#0000ff" stroke-width="1" fill="none"/>
<path d="M866 496.5h23M860 497.5h6M889 497.5h6M858 498.5h2M895 498.5h4M855 499.5h3M899 499.5h4M988 499.5h2M852 500.5h3M903 500.5h4M986 500.5h2M850 501.5h2M907 501.5h6M983 501.5h3M847 502.5h3M913 502.5h8M980 502.5h3M845 503.5h2M921 503.5h8M978 503.5h2M843 504.5h2M929 504.5h8M975 504.5h3M841 505.5h2M937 505.5h18M967 505.5h8M839 506.5h2M955 506.5h12M94 507.5h11M837 507.5h2M82 508.5h12M105 508.5h6M836 508.5h1M38 509.5h44M111 509.5h2M835 509.5h1M26 510.5h12M113 510.5h3M834 510.5h1M18 511.5h8M116 511.5h2M832 511.5h2M10 512.5h8M118 512.5h2M831 512.5h1M5 513.5h5M120 513.5h2M830 513.5h1M122 514.5h2M829 514.5h1M124 515.5h2M828 515.5h1M126 516.5h2M827 516.5h1M128 517.5h2M826 517.5h1M130 518.5h2M824 518.5h2M132 519.5h2M823 519.5h1M134 520.5h2M822 520.5h1M136 521.5h1M821 521.5h1M137 522.5h2M820 522.5h1M139 523.5h2M819 523.5h1M141 524.5h1M819 524.5h1M142 525.5h2M818 525.5h1M144 526.5h1M817 526.5h1M145 527.5h2M816 527.5h1M147 528.5h2M506 528.5h15M815 528.5h1M149 529.5h1M498 529.5h8M521 529.5h24M815 529.5h1M150 530.5h2M492 530.5h6M545 530.5h8M814 530.5h1M152 531.5h1M490 531.5h2M553 531.5h8M644 531.5h29M813 531.5h1M153 532.5h2M487 532.5h3M561 532.5h8M640 532.5h4M673 532.5h6M812 532.5h1M155 533.5h2M485 533.5h2M569 533.5h8M634 533.5h6M679 533.5h2M811 533.5h1M157 534.5h1M483 534.5h2M577 534.5h8M628 534.5h6M681 534.5h3M810 534.5h1M158 535.5h1M481 535.5h2M585 535.5h8M624 535.5h4M684 535.5h2M809 535.5h1M159 536.5h2M479 536.5h2M593 536.5h8M618 536.5h6M686 536.5h2M809 536.5h1M161 537.5h1M477 537.5h2M601 537.5h17M688 537.5h1M808 537.5h1M162 538.5h1M475 538.5h2M689 538.5h2M807 538.5h1M163 539.5h2M474 539.5h1M691 539.5h2M806 539.5h1M165 540.5h1M472 540.5h2M693 540.5h1M805 540.5h1M166 541.5h2M470 541.5h2M694 541.5h1M804 541.5h1M168 542.5h1M469 542.5h1M695 542.5h2M803 542.5h1M169 543.5h2M467 543.5h2M697 543.5h1M802 543.5h1M171 544.5h2M466 544.5h1M698 544.5h1M801 544.5h1M173 545.5h1M464 545.5h2M699 545.5h2M801 545.5h1M174 546.5h2M462 546.5h2M701 546.5h1M800 546.5h1M176 547.5h2M461 547.5h1M702 547.5h1M799 547.5h1M178 548.5h2M459 548.5h2M703 548.5h1M798 548.5h1M180 549.5h2M458 549.5h1M704 549.5h1M797 549.5h1M182 550.5h2M456 550.5h2M705 550.5h2M796 550.5h1M184 551.5h2M454 551.5h2M707 551.5h1M795 551.5h1M186 552.5h2M453 552.5h1M708 552.5h1M794 552.5h1M188 553.5h3M452 553.5h1M709 553.5h1M793 553.5h1M191 554.5h2M451 554.5h1M710 554.5h1M793 554.5h1M193 555.5h3M450 555.5h1M711 555.5h1M792 555.5h1M196 556.5h3M449 556.5h1M712 556.5h1M791 556.5h1M199 557.5h2M448 557.5h1M713 557.5h2M790 557.5h1M201 558.5h3M447 558.5h1M715 558.5h1M789 558.5h1M204 559.5h2M446 559.5h1M716 559.5h1M788 559.5h1M206 560.5h2M445 560.5h1M717 560.5h1M787 560.5h1M208 561.5h2M444 561.5h1M718 561.5h2M786 561.5h1M210 562.5h2M443 562.5h1M720 562.5h1M785 562.5h1M212 563.5h2M442 563.5h1M721 563.5h2M785 563.5h1M214 564.5h1M441 564.5h1M723 564.5h2M784 564.5h1M215 565.5h2M441 565.5h1M725 565.5h1M783 565.5h1M217 566.5h1M440 566.5h1M726 566.5h2M782 566.5h1M218 567.5h1M439 567.5h1M728 567.5h1M781 567.5h1M219 568.5h2M438 568.5h1M729 568.5h2M780 568.5h1M221 569.5h1M437 569.5h1M731 569.5h2M778 569.5h2M222 570.5h2M436 570.5h1M733 570.5h1M777 570.5h1M224 571.5h1M435 571.5h1M734 571.5h2M776 571.5h1M225 572.5h2M434 572.5h1M736 572.5h2M774 572.5h2M227 573.5h2M432 573.5h2M738 573.5h2M773 573.5h1M229 574.5h1M431 574.5h1M740 574.5h3M771 574.5h2M230 575.5h1M430 575.5h1M743 575.5h2M769 575.5h2M231 576.5h1M429 576.5h1M745 576.5h3M767 576.5h2M232 577.5h1M428 577.5h1M748 577.5h5M762 577.5h5M233 578.5h2M427 578.5h1M753 578.5h9M235 579.5h1M426 579.5h1M236 580.5h1M424 580.5h2M237 581.5h1M423 581.5h1M238 582.5h1M422 582.5h1M239 583.5h1M421 583.5h1M240 584.5h1M420 584.5h1M241 585.5h2M419 585.5h1M243 586.5h1M418 586.5h1M244 587.5h1M417 587.5h1M245 588.5h1M416 588.5h1M246 589.5h1M415 589.5h1M247 590.5h1M414 590.5h1M248 591.5h1M413 591.5h1M249 592.5h1M412 592.5h1M250 593.5h1M411 593.5h1M251 594.5h1M410 594.5h1M252 595.5h1M408 595.5h2M253 596.5h1M407 596.5h1M254 597.5h1M406 597.5h1M255 598.5h1M405 598.5h1M256 599.5h1M404 599.5h1M257 600.5h1M402 600.5h2M257 601.5h1M401 601.5h1M258 602.5h1M400 602.5h1M259 603.5h1M398 603.5h2M260 604.5h1M397 604.5h1M261 605.5h1M396 605.5h1M262 606.5h1M394 606.5h2M263 607.5h1M393 607.5h1M264 608.5h1M392 608.5h1M265 609.5h2M390 609.5h2M267 610.5h1M389 610.5h1M268 611.5h1M387 611.5h2M269 612.5h1M385 612.5h2M270 613.5h1M383 613.5h2M271 614.5h1M380 614.5h3M272 615.5h1M378 615.5h2M273 616.5h2M376 616.5h2M275 617.5h1M374 617.5h2M276 618.5h1M371 618.5h3M277 619.5h1M369 619.5h2M278 620.5h2M367 620.5h2M280 621.5h1M364 621.5h3M281 622.5h2M362 622.5h2M283 623.5h2M359 623.5h3M285 624.5h1M356 624.5h3M286 625.5h2M354 625.5h2M288 626.5h2M351 626.5h3M290 627.5h2M348 627.5h3M292 628.5h3M344 628.5h4M295 629.5h2M340 629.5h4M297 630.5h3M336 630.5h4M300 631.5h3M331 631.5h5M303 632.5h2M327 632.5h4M305 633.5h3M323 633.5h4M308 634.5h15" stroke="#ff0000" stroke-width="1" fill="none"/>
<path d="M989 481.5h1M988 482.5h1M987 483.5h1M986 484.5h1M985 485.5h1M984 486.5h1M983 487.5h1M982 488.5h1M981 489.5h1M980 490.5h1M821 491.5h4M979 491.5h1M819 492.5h2M825 492.5h6M978 492.5h1M817 493.5h2M831 493.5h4M977 493.5h1M815 494.5h2M835 494.5h4M977 494.5h1M813 495.5h2M839 495.5h4M976 495.5h1M812 496.5h1M843 496.5h4M975 496.5h1M811 497.5h1M847 497.5h4M974 497.5h1M810 498.5h1M851 498.5h6M866 498.5h7M970 498.5h4M808 499.5h2M857 499.5h9M873 499.5h8M962 499.5h8M807 500.5h1M881 500.5h6M956 500.5h6M806 501.5h1M887 501.5h4M954 501.5h2M805 502.5h1M891 502.5h4M951 502.5h3M804 503.5h1M895 503.5h2M948 503.5h3M803 504.5h1M897 504.5h3M944 504.5h4M76 505.5h5M90 505.5h4M802 505.5h1M900 505.5h2M940 505.5h4M74 506.5h2M81 506.5h9M94 506.5h2M800 506.5h2M902 506.5h2M938 506.5h2M52 507.5h13M71 507.5h3M96 507.5h2M799 507.5h1M904 507.5h2M935 507.5h3M48 508.5h4M65 508.5h6M98 508.5h2M798 508.5h1M906 508.5h2M924 508.5h11M34 509.5h14M100 509.5h2M797 509.5h1M908 509.5h5M920 509.5h4M5 510.5h2M28 510.5h6M102 510.5h1M796 510.5h1M913 510.5h7M7 511.5h2M24 511.5h4M102 511.5h1M795 511.5h1M9 512.5h3M18 512.5h6M103 512.5h1M794 512.5h1M12 513.5h6M104 513.5h1M793 513.5h1M105 514.5h1M793 514.5h1M105 515.5h1M792 515.5h1M106 516.5h1M791 516.5h1M107 517.5h1M790 517.5h1M108 518.5h1M789 518.5h1M108 519.5h1M788 519.5h1M109 520.5h1M787 520.5h1M110 521.5h1M786 521.5h1M110 522.5h1M785 522.5h1M111 523.5h1M785 523.5h1M112 524.5h1M784 524.5h1M113 525.5h1M460 525.5h5M783 525.5h1M113 526.5h1M456 526.5h4M465 526.5h16M620 526.5h13M782 526.5h1M114 527.5h1M452 527.5h4M481 527.5h6M616 527.5h4M633 527.5h6M781 527.5h1M115 528.5h1M450 528.5h2M487 528.5h4M532 528.5h5M613 528.5h3M639 528.5h2M780 528.5h1M116 529.5h1M447 529.5h3M491 529.5h4M528 529.5h4M537 529.5h6M611 529.5h2M641 529.5h3M780 529.5h1M116 530.5h1M445 530.5h2M495 530.5h4M524 530.5h4M543 530.5h2M609 530.5h2M644 530.5h2M779 530.5h1M117 531.5h1M444 531.5h1M499 531.5h6M520 531.5h4M545 531.5h3M607 531.5h2M646 531.5h2M779 531.5h1M118 532.5h1M442 532.5h2M505 532.5h15M548 532.5h2M605 532.5h2M648 532.5h2M778 532.5h1M119 533.5h1M441 533.5h1M550 533.5h2M603 533.5h2M650 533.5h2M778 533.5h1M119 534.5h1M440 534.5h1M552 534.5h1M601 534.5h2M652 534.5h3M777 534.5h1M120 535.5h1M438 535.5h2M553 535.5h2M599 535.5h2M655 535.5h4M777 535.5h1M121 536.5h1M437 536.5h1M555 536.5h2M597 536.5h2M659 536.5h6M776 536.5h1M122 537.5h1M436 537.5h1M557 537.5h4M596 537.5h1M665 537.5h5M776 537.5h1M123 538.5h1M435 538.5h1M561 538.5h6M595 538.5h1M670 538.5h1M775 538.5h1M123 539.5h1M434 539.5h1M567 539.5h2M594 539.5h1M671 539.5h2M775 539.5h1M124 540.5h1M433 540.5h1M569 540.5h3M592 540.5h2M673 540.5h1M774 540.5h1M125 541.5h1M432 541.5h1M572 541.5h11M591 541.5h1M674 541.5h1M774 541.5h1M126 542.5h2M431 542.5h1M583 542.5h4M590 542.5h1M675 542.5h2M773 542.5h1M128 543.5h1M430 543.5h1M587 543.5h3M677 543.5h1M773 543.5h1M129 544.5h2M429 544.5h1M678 544.5h1M772 544.5h1M131 545.5h2M428 545.5h1M678 545.5h1M772 545.5h1M133 546.5h2M427 546.5h1M679 546.5h1M771 546.5h1M135 547.5h2M426 547.5h1M680 547.5h1M771 547.5h1M137 548.5h3M425 548.5h1M681 548.5h1M770 548.5h1M140 549.5h3M425 549.5h1M681 549.5h1M770 549.5h1M143 550.5h2M424 550.5h1M682 550.5h1M769 550.5h1M145 551.5h3M423 551.5h1M683 551.5h1M769 551.5h1M148 552.5h5M422 552.5h1M684 552.5h1M768 552.5h1M153 553.5h6M421 553.5h1M684 553.5h1M768 553.5h1M159 554.5h4M420 554.5h1M685 554.5h1M767 554.5h1M163 555.5h3M419 555.5h1M686 555.5h1M767 555.5h1M166 556.5h2M419 556.5h1M686 556.5h1M766 556.5h1M168 557.5h2M418 557.5h1M687 557.5h1M766 557.5h1M170 558.5h2M417 558.5h1M687 558.5h1M765 558.5h1M172 559.5h2M416 559.5h1M688 559.5h1M765 559.5h1M174 560.5h2M415 560.5h1M688 560.5h1M763 560.5h2M176 561.5h2M415 561.5h1M689 561.5h1M761 561.5h2M178 562.5h2M414 562.5h1M690 562.5h1M759 562.5h2M180 563.5h11M413 563.5h1M690 563.5h1M757 563.5h2M191 564.5h2M412 564.5h1M691 564.5h1M755 564.5h2M193 565.5h3M411 565.5h1M691 565.5h1M754 565.5h1M196 566.5h2M410 566.5h1M692 566.5h1M752 566.5h2M198 567.5h1M408 567.5h2M692 567.5h1M750 567.5h2M198 568.5h1M407 568.5h1M693 568.5h1M749 568.5h1M199 569.5h1M406 569.5h1M694 569.5h1M747 569.5h2M200 570.5h1M404 570.5h2M695 570.5h1M746 570.5h1M201 571.5h1M402 571.5h2M695 571.5h1M744 571.5h2M201 572.5h1M399 572.5h3M696 572.5h1M742 572.5h2M202 573.5h1M397 573.5h2M697 573.5h1M741 573.5h1M203 574.5h1M396 574.5h1M698 574.5h1M740 574.5h1M204 575.5h1M396 575.5h1M699 575.5h1M739 575.5h1M204 576.5h1M395 576.5h1M699 576.5h1M738 576.5h1M205 577.5h1M395 577.5h1M700 577.5h1M737 577.5h1M206 578.5h1M394 578.5h1M701 578.5h1M737 578.5h1M207 579.5h1M393 579.5h1M702 579.5h1M736 579.5h1M208 580.5h1M393 580.5h1M703 580.5h1M735 580.5h1M209 581.5h1M392 581.5h1M704 581.5h1M734 581.5h1M209 582.5h1M391 582.5h1M705 582.5h1M733 582.5h1M210 583.5h1M391 583.5h1M705 583.5h1M731 583.5h2M211 584.5h1M390 584.5h1M706 584.5h1M730 584.5h1M212 585.5h1M390 585.5h1M707 585.5h1M728 585.5h2M213 586.5h1M389 586.5h1M708 586.5h1M726 586.5h2M214 587.5h1M388 587.5h1M709 587.5h2M724 587.5h2M215 588.5h1M388 588.5h1M711 588.5h2M722 588.5h2M215 589.5h1M387 589.5h1M713 589.5h3M719 589.5h3M216 590.5h1M387 590.5h1M716 590.5h3M217 591.5h1M386 591.5h1M218 592.5h1M385 592.5h1M219 593.5h1M385 593.5h1M219 594.5h1M384 594.5h1M220 595.5h1M383 595.5h1M221 596.5h1M383 596.5h1M222 597.5h1M382 597.5h1M222 598.5h1M382 598.5h1M223 599.5h1M381 599.5h1M224 600.5h1M379 600.5h2M224 601.5h1M377 601.5h2M225 602.5h1M375 602.5h2M226 603.5h1M373 603.5h2M226 604.5h1M371 604.5h2M227 605.5h1M370 605.5h1M228 606.5h1M368 606.5h2M228 607.5h1M366 607.5h2M229 608.5h4M365 608.5h1M233 609.5h5M363 609.5h2M238 610.5h1M362 610.5h1M238 611.5h1M360 611.5h2M239 612.5h1M358 612.5h2M239 613.5h1M357 613.5h1M240 614.5h1M356 614.5h1M240 615.5h1M354 615.5h2M241 616.5h1M353 616.5h1M241 617.5h1M352 617.5h1M242 618.5h1M350 618.5h2M242 619.5h1M340 619.5h10M243 620.5h1M336 620.5h4M243 621.5h1M333 621.5h3M244 622.5h1M331 622.5h2M244 623.5h1M330 623.5h1M245 624.5h1M328 624.5h2M245 625.5h1M326 625.5h2M246 626.5h1M324 626.5h2M247 627.5h2M320 627.5h4M249 628.5h1M316 628.5h4M250 629.5h1M312 629.5h4M251 630.5h2M306 630.5h6M253 631.5h1M301 631.5h5M254 632.5h1M299 632.5h2M255 633.5h2M297 633.5h2M257 634.5h1M295 634.5h2M258 635.5h1M292 635.5h3M259 636.5h2M288 636.5h4M261 637.5h4M284 637.5h4M265 638.5h8M280 638.5h4M273 639.5h7" stroke="#ffffff" stroke-width="1" fill="none"/>
<rect x="1240" y="95" width="36" height="11" fill="#fff"/>
<g fill="#00008b"><rect x="6" y="69" width="192" height="12"/><rect x="8" y="211" width="58" height="11"/><rect x="6" y="474" width="118" height="12"/><rect x="1152" y="69" width="85" height="13"/></g>
<g font-family="Liberation Sans, Arial, sans-serif" font-size="9.33" fill="#fff" stroke="#fff" stroke-width="0.25" shape-rendering="auto" text-rendering="geometricPrecision">
<text x="8" y="78" xml:space="preserve">GBPUSD,M30  1.7984 1.7997 1.7977 1.7994</text>
<text x="10" y="220">#165575 buy</text>
<text x="8" y="484" xml:space="preserve">MACD linie  0.0015 0.0010</text>
<text x="1153" y="79" letter-spacing="-0.12">SARGBP Expert</text>
<text x="1241" y="80.8">1.8005</text>
<text x="1241" y="122.8">1.7985</text>
<text x="1241" y="164.8">1.7965</text>
<text x="1241" y="196.8">1.7950</text>
<text x="1241" y="238.8">1.7930</text>
<text x="1241" y="270.8">1.7915</text>
<text x="1241" y="312.8">1.7895</text>
<text x="1241" y="354.8">1.7875</text>
<text x="1241" y="386.8">1.7860</text>
<text x="1241" y="428.8">1.7840</text>
<text x="1241" y="460.8">1.7825</text>
<text x="1242.5" y="480.8">0.0017</text>
<text x="1242.5" y="544.8">0.00</text>
<text x="1242.5" y="643.8">-0.0025</text>
<text x="1244" y="104" fill="#00008b" stroke="#00008b">1.7994</text>
<text x="5" y="661">11 Oct 20:30</text>
<text x="69" y="661">12 Oct 00:30</text>
<text x="133" y="661">12 Oct 04:30</text>
<text x="197" y="661">12 Oct 08:30</text>
<text x="261" y="661">12 Oct 12:30</text>
<text x="325" y="661">12 Oct 16:30</text>
<text x="389" y="661">12 Oct 20:30</text>
<text x="453" y="661">13 Oct 00:30</text>
<text x="517" y="661">13 Oct 04:30</text>
<text x="581" y="661">13 Oct 08:30</text>
<text x="645" y="661">13 Oct 12:30</text>
<text x="709" y="661">13 Oct 16:30</text>
<text x="773" y="661">13 Oct 20:30</text>
<text x="837" y="661">14 Oct 00:30</text>
<text x="901" y="661">14 Oct 04:30</text>
<text x="965" y="661">14 Oct 08:30</text>
</g>
<g shape-rendering="auto" stroke="#fff" fill="none" stroke-width="1"><circle cx="1228.5" cy="75.5" r="5"/><path d="M1226 77.5q2.5 2.5 5 0" /><path d="M1226.5 73v2M1230.5 73v2"/></g>
<path d="M564.500 289.500V305.500L568.500 301.700L571.500 308.700L573.700 307.700L570.700 300.700H575.700Z" fill="#fff" stroke="#000" stroke-width="1" shape-rendering="auto"/>
</svg>
<svg class="abs" style="left:4px;top:674px" width="7" height="6" viewBox="0 0 7 6"><path d="M0.700 0.500L5.300 4.500M5.300 0.500L0.700 4.500" stroke="#000" stroke-width="1.500" fill="none"/></svg>
<div class="abs" style="left:1px;top:685px;width:13px;height:61px;background:#808080"></div>
<div class="abs" style="left:1px;top:746px;width:0;height:0"><div style="position:absolute;left:0;top:0;transform-origin:0 0;transform:rotate(-90deg);width:61px;height:13px;line-height:13px;font-size:11px;color:#d4d0c8;padding-left:3px;white-space:nowrap;letter-spacing:0.1px">Terminal</div></div>
<div class="abs" style="left:16px;top:672px;width:1261px;height:60px;box-sizing:border-box;border:1px solid;border-color:#808080 #fff #fff #808080;background:#fff"></div>
<div class="abs" style="left:17px;top:673px;width:1259px;height:58px;box-sizing:border-box;border:1px solid;border-color:#404040 #d4d0c8 #d4d0c8 #404040"></div>
<div class="hd" style="left:18px;width:115px"></div>
<div class="hd" style="left:133px;width:214px"></div>
<div class="hd" style="left:347px;width:97px"></div>
<div class="hd" style="left:444px;width:58px"></div>
<div class="hd" style="left:502px;width:87px"></div>
<div class="hd" style="left:589px;width:97px"></div>
<div class="hd" style="left:686px;width:97px"></div>
<div class="hd" style="left:783px;width:97px"></div>
<div class="hd" style="left:880px;width:97px"></div>
<div class="hd" style="left:977px;width:97px"></div>
<div class="hd" style="left:1074px;width:97px"></div>
<div class="hd" style="left:1171px;width:104px"></div>
<span id="t17" class="tx" style="left:22.90px;top:676.19px;font-size:11px;color:#000;letter-spacing:0.044px;">Ticket</span>
<span id="t18" class="tx" style="left:323.40px;top:676.19px;font-size:11px;color:#000;letter-spacing:0.064px;">Zeit</span>
<span id="t19" class="tx" style="left:423.50px;top:676.19px;font-size:11px;color:#000;letter-spacing:0.546px;">Art</span>
<span id="t20" class="tx" style="left:475.70px;top:676.19px;font-size:11px;color:#000;letter-spacing:0.051px;">Lots</span>
<span id="t21" class="tx" style="left:548.90px;top:676.19px;font-size:11px;color:#000;letter-spacing:-0.281px;">Symbol</span>
<span id="t22" class="tx" style="left:656.70px;top:676.19px;font-size:11px;color:#000;letter-spacing:-0.233px;">Preis</span>
<span id="t23" class="tx" style="left:755.50px;top:676.19px;font-size:11px;color:#000;letter-spacing:-0.185px;">S / L</span>
<span id="t24" class="tx" style="left:851.80px;top:676.19px;font-size:11px;color:#000;letter-spacing:-0.066px;">T / P</span>
<span id="t25" class="tx" style="left:947.80px;top:676.19px;font-size:11px;color:#000;letter-spacing:-0.272px;">Preis</span>
<span id="t26" class="tx" style="left:1039.20px;top:676.19px;font-size:11px;color:#000;letter-spacing:-0.798px;">Comm</span>
<span id="t27" class="tx" style="left:1138.90px;top:676.19px;font-size:11px;color:#000;letter-spacing:-0.183px;">Swap</span>
<span id="t28" class="tx" style="left:1241.70px;top:676.19px;font-size:11px;color:#000;letter-spacing:0.319px;">Profit</span>
<div class="abs" style="left:18px;top:693px;width:1257px;height:17px;background:#0a246a"></div>
<div class="abs" style="left:132px;top:693px;width:1px;height:17px;background:#d4d0c8"></div>
<div class="abs" style="left:346px;top:693px;width:1px;height:17px;background:#d4d0c8"></div>
<div class="abs" style="left:443px;top:693px;width:1px;height:17px;background:#d4d0c8"></div>
<div class="abs" style="left:501px;top:693px;width:1px;height:17px;background:#d4d0c8"></div>
<div class="abs" style="left:588px;top:693px;width:1px;height:17px;background:#d4d0c8"></div>
<div class="abs" style="left:685px;top:693px;width:1px;height:17px;background:#d4d0c8"></div>
<div class="abs" style="left:782px;top:693px;width:1px;height:17px;background:#d4d0c8"></div>
<div class="abs" style="left:879px;top:693px;width:1px;height:17px;background:#d4d0c8"></div>
<div class="abs" style="left:976px;top:693px;width:1px;height:17px;background:#d4d0c8"></div>
<div class="abs" style="left:1073px;top:693px;width:1px;height:17px;background:#d4d0c8"></div>
<div class="abs" style="left:1170px;top:693px;width:1px;height:17px;background:#d4d0c8"></div>
<span id="t29" class="tx" style="left:38.20px;top:695.19px;font-size:11px;color:#fff;letter-spacing:-0.103px;">165575</span>
<span id="t30" class="tx" style="left:257.10px;top:695.19px;font-size:11px;color:#fff;letter-spacing:0.054px;">2004.10.13 20:48</span>
<span id="t31" class="tx" style="left:422.30px;top:695.19px;font-size:11px;color:#fff;letter-spacing:0.283px;">buy</span>
<span id="t32" class="tx" style="left:476.70px;top:695.19px;font-size:11px;color:#fff;letter-spacing:0.045px;">2.00</span>
<span id="t33" class="tx" style="left:550.00px;top:695.19px;font-size:11px;color:#fff;letter-spacing:-0.099px;">gbpusd</span>
<span id="t34" class="tx" style="left:649.20px;top:695.19px;font-size:11px;color:#fff;letter-spacing:0.024px;">1.7937</span>
<span id="t35" class="tx" style="left:745.70px;top:695.19px;font-size:11px;color:#fff;letter-spacing:0.107px;">1.7967</span>
<span id="t36" class="tx" style="left:843.50px;top:695.19px;font-size:11px;color:#fff;letter-spacing:0.041px;">1.8037</span>
<span id="t37" class="tx" style="left:939.50px;top:695.19px;font-size:11px;color:#fff;letter-spacing:0.124px;">1.7991</span>
<span id="t38" class="tx" style="left:1048.50px;top:695.19px;font-size:11px;color:#fff;letter-spacing:0.195px;">0.00</span>
<span id="t39" class="tx" style="left:1145.10px;top:695.19px;font-size:11px;color:#fff;letter-spacing:0.345px;">0.00</span>
<span id="t40" class="tx" style="left:1231.40px;top:695.19px;font-size:11px;color:#fff;letter-spacing:-0.024px;">1080.00</span>
<svg class="abs" style="left:20px;top:695px" width="12" height="13" viewBox="0 0 12 13" shape-rendering="crispEdges"><rect x="0" y="0" width="12" height="13" fill="#404040"/><rect x="0" y="0" width="11" height="12" fill="#fff"/><path d="M3 3.500h3M3 5.500h4M3 7.500h4M3 9.500h5" stroke="#0000ff"/></svg>
<div class="abs" style="left:18px;top:710px;width:1257px;height:17px;background:#c8c8c8"></div>
<svg class="abs" style="left:21px;top:714px" width="11" height="9" viewBox="0 0 11 9"><path d="M5.500 0L11 5H8V9H3.500V5H0Z" fill="#0000ff"/></svg>
<span id="t41" class="tx" style="left:37.00px;top:712.19px;font-size:11px;color:#000;letter-spacing:-0.046px;">Balance: 6137.00</span>
<span id="t42" class="tx" style="left:127.20px;top:712.19px;font-size:11px;color:#000;letter-spacing:0.102px;">Credit: 0</span>
<span id="t43" class="tx" style="left:174.80px;top:712.19px;font-size:11px;color:#000;letter-spacing:0.083px;">Equity: 7217.00</span>
<span id="t44" class="tx" style="left:258.20px;top:712.19px;font-size:11px;color:#000;letter-spacing:-0.044px;">Margin: 2000 Free margin: 5217 Margin level: 360.8%</span>
<span id="t45" class="tx" style="left:1231.40px;top:712.19px;font-size:11px;color:#000;letter-spacing:-0.024px;">1080.00</span>
<div class="abs" style="left:16px;top:731px;width:1261px;height:1px;background:#000"></div>
<svg class="abs" style="left:0;top:731px" width="460" height="18" viewBox="0 0 460 18">
<path d="M60.0 0.5L67.5 14.500H121.0L128.5 0.5Z" fill="#d4d0c8"/>
<path d="M67.5 14.500H121.0" stroke="#606060" fill="none"/>
<path d="M60.0 0.5L67.5 14.700M121.0 14.700L128.5 0.5" stroke="#000" stroke-width="1.100" fill="none"/>
<path d="M120.0 0.5L127.5 14.500H186.5L194.0 0.5Z" fill="#d4d0c8"/>
<path d="M127.5 14.500H186.5" stroke="#606060" fill="none"/>
<path d="M120.0 0.5L127.5 14.700M186.5 14.700L194.0 0.5" stroke="#000" stroke-width="1.100" fill="none"/>
<path d="M185.5 0.5L193.0 14.500H245.5L253.0 0.5Z" fill="#d4d0c8"/>
<path d="M193.0 14.500H245.5" stroke="#606060" fill="none"/>
<path d="M185.5 0.5L193.0 14.700M245.5 14.700L253.0 0.5" stroke="#000" stroke-width="1.100" fill="none"/>
<path d="M244.6 0.5L252.1 14.500H304.8L312.3 0.5Z" fill="#d4d0c8"/>
<path d="M252.1 14.500H304.8" stroke="#606060" fill="none"/>
<path d="M244.6 0.5L252.1 14.700M304.8 14.700L312.3 0.5" stroke="#000" stroke-width="1.100" fill="none"/>
<path d="M303.7 0.5L311.2 14.500H432.2L439.7 0.5Z" fill="#d4d0c8"/>
<path d="M311.2 14.500H432.2" stroke="#606060" fill="none"/>
<path d="M303.7 0.5L311.2 14.700M432.2 14.700L439.7 0.5" stroke="#000" stroke-width="1.100" fill="none"/>
<path d="M18.300 0L25.300 14.500H60.800L68 0Z" fill="#fff"/>
<path d="M18.300 0.500L25.300 14.700M60.600 14.700L68 0.500" stroke="#000" stroke-width="1.100" fill="none"/>
<path d="M25.300 14.500H60.800" stroke="#808080" fill="none"/>
<rect x="16" y="2" width="1" height="13" fill="#0a5fd0"/>
</svg>
<span id="t46" class="tx" style="left:28.10px;top:731.71px;font-size:9.5px;color:#000;letter-spacing:-0.118px;">Handel</span>
<span id="t47" class="tx" style="left:69.80px;top:731.71px;font-size:9.5px;color:#000;letter-spacing:-0.191px;">Nachrichten</span>
<span id="t48" class="tx" style="left:130.80px;top:731.71px;font-size:9.5px;color:#000;letter-spacing:-0.135px;">Kontohistorie</span>
<span id="t49" class="tx" style="left:196.40px;top:731.71px;font-size:9.5px;color:#000;letter-spacing:-0.185px;">Warnungen</span>
<span id="t50" class="tx" style="left:255.90px;top:731.71px;font-size:9.5px;color:#000;letter-spacing:-0.076px;">Briefkasten</span>
<span id="t51" class="tx" style="left:315.00px;top:731.71px;font-size:9.5px;color:#000;letter-spacing:-0.240px;">Rufdatenaufzeichnungsdatei</span>
<div class="hl" style="top:750px;background:#808080"></div><div class="hl" style="top:751px;background:#fff"></div><div class="hl" style="top:771px;background:#fff"></div>
<span id="t52" class="tx" style="left:3.30px;top:755.19px;font-size:11px;color:#000;letter-spacing:-0.198px;">Ersuchen Sie Hilfe mit F1-Drücken</span>
<div class="sp" style="left:661px;width:73px;"></div>
<div class="sp" style="left:737px;width:98px;"></div>
<div class="sp" style="left:838px;width:69px;"></div>
<div class="sp" style="left:910px;width:68px;"></div>
<div class="sp" style="left:981px;width:66px;"></div>
<div class="sp" style="left:1050px;width:68px;"></div>
<div class="sp" style="left:1121px;width:63px;"></div>
<div class="sp" style="left:1187px;width:74px;background:#40ff40;"></div>
<span id="t53" class="tx" style="left:664.50px;top:755.19px;font-size:11px;color:#000;letter-spacing:-0.094px;">Default</span>
<span id="t54" class="tx" style="left:740.50px;top:755.19px;font-size:11px;color:#000;letter-spacing:-0.103px;">2004.10.13 07:30</span>
<span id="t55" class="tx" style="left:841.20px;top:755.19px;font-size:11px;color:#000;letter-spacing:-0.114px;">O: 1.7895</span>
<span id="t56" class="tx" style="left:913.20px;top:755.19px;font-size:11px;color:#000;letter-spacing:-0.045px;">H: 1.7906</span>
<span id="t57" class="tx" style="left:984.20px;top:755.19px;font-size:11px;color:#000;letter-spacing:-0.042px;">L: 1.7888</span>
<span id="t58" class="tx" style="left:1053.30px;top:755.19px;font-size:11px;color:#000;letter-spacing:-0.167px;">C: 1.7895</span>
<span id="t59" class="tx" style="left:1123.50px;top:755.19px;font-size:11px;color:#000;letter-spacing:0.220px;">V: 118</span>
<span id="t60" class="tx" style="left:1190.10px;top:755.19px;font-size:11px;color:#000;letter-spacing:0.272px;">28/1 kb</span>
<svg class="abs" style="left:1265px;top:759px" width="13" height="13" viewBox="0 0 13 13"><path d="M13 1L1 13M13 5L5 13M13 9L9 13" stroke="#808080" stroke-width="1.6"/><path d="M13 0L0 13M13 4L4 13M13 8L8 13" stroke="#fff" stroke-width="1"/></svg>
</body></html>
